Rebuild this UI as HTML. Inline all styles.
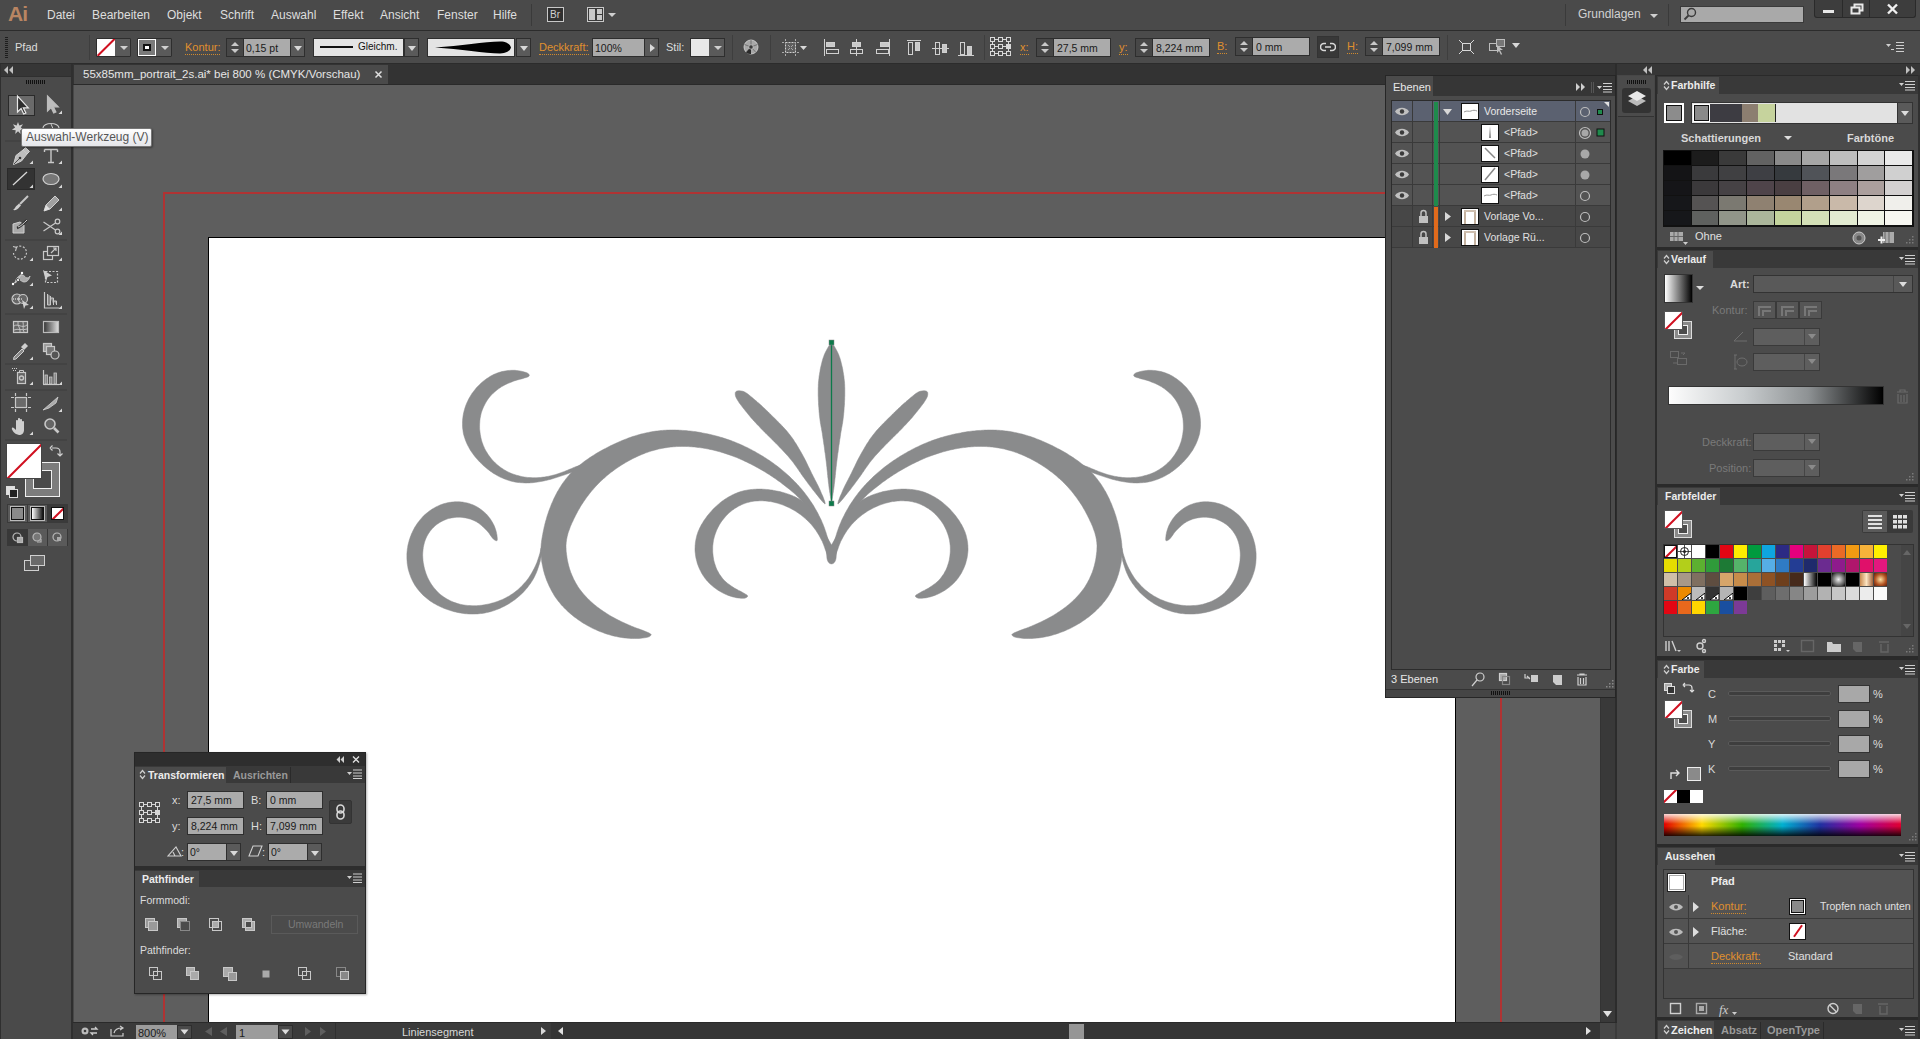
<!DOCTYPE html>
<html><head><meta charset="utf-8">
<style>
*{margin:0;padding:0;box-sizing:border-box}
html,body{width:1920px;height:1039px;overflow:hidden;background:#484848;font-family:"Liberation Sans",sans-serif;color:#d8d8d8;position:relative}
.a{position:absolute}
.t{position:absolute;white-space:nowrap;line-height:1}
.mn{top:9px;font-size:12px;color:#dedede}
.tri{width:0;height:0;border-left:4px solid transparent;border-right:4px solid transparent;border-top:4px solid #d0d0d0}
.lab{font-size:11px;color:#e0902e;border-bottom:1px dotted #d08a2e;padding-bottom:1px}
.spin{width:18px;height:19px;background:#474747;border:1px solid #2e2e2e}
.spin:before{content:"";position:absolute;left:4px;top:3px;border-left:4px solid transparent;border-right:4px solid transparent;border-bottom:4px solid #c8c8c8}
.spin:after{content:"";position:absolute;left:4px;top:10px;border-left:4px solid transparent;border-right:4px solid transparent;border-top:4px solid #c8c8c8}
.inp{height:19px;background:#ababab;border:1px solid #2e2e2e}
.it{font-size:10.5px;color:#1a1a1a}
.ddb{position:absolute;width:15px;height:19px;background:#5a5a5a;border:1px solid #2e2e2e}
.ddb:after{content:"";position:absolute;left:3px;top:7px;border-left:4px solid transparent;border-right:4px solid transparent;border-top:5px solid #d8d8d8}
</style></head><body>
<!-- MENU BAR -->
<div class="a" style="left:0;top:0;width:1920px;height:30px;background:#4a4a4a"></div>
<div class="a" style="left:0;top:30px;width:1920px;height:1px;background:#2c2c2c"></div>
<div class="t" style="left:8px;top:3px;font-size:21px;font-weight:bold;color:#b98562;letter-spacing:-1px">Ai</div>
<div class="t mn" style="left:47px">Datei</div>
<div class="t mn" style="left:92px">Bearbeiten</div>
<div class="t mn" style="left:167px">Objekt</div>
<div class="t mn" style="left:220px">Schrift</div>
<div class="t mn" style="left:271px">Auswahl</div>
<div class="t mn" style="left:333px">Effekt</div>
<div class="t mn" style="left:380px">Ansicht</div>
<div class="t mn" style="left:437px">Fenster</div>
<div class="t mn" style="left:493px">Hilfe</div>
<div class="a" style="left:531px;top:4px;width:1px;height:22px;background:#3a3a3a"></div>
<div class="a" style="left:547px;top:7px;width:17px;height:15px;border:1px solid #c8c8c8;background:#303030"></div>
<div class="t" style="left:550px;top:10px;font-size:10px;color:#d0d0d0">Br</div>
<div class="a" style="left:587px;top:7px;width:17px;height:15px;border:1px solid #c8c8c8;background:#3a3a3a"></div>
<div class="a" style="left:589px;top:9px;width:6px;height:11px;background:#c8c8c8"></div>
<div class="a" style="left:597px;top:9px;width:5px;height:5px;background:#c8c8c8"></div>
<div class="a" style="left:597px;top:15px;width:5px;height:5px;background:#c8c8c8"></div>
<div class="a tri" style="left:608px;top:13px"></div>
<div class="a" style="left:1565px;top:4px;width:1px;height:22px;background:#3a3a3a"></div>
<div class="t" style="left:1578px;top:8px;font-size:12px;color:#d2d2d2">Grundlagen</div>
<div class="a tri" style="left:1650px;top:14px"></div>
<div class="a" style="left:1668px;top:4px;width:1px;height:22px;background:#3a3a3a"></div>
<div class="a" style="left:1680px;top:6px;width:124px;height:17px;background:#a9a9a9;border:1px solid #3a3a3a"></div>
<svg class="a" style="left:1683px;top:7px" width="14" height="14"><circle cx="8.5" cy="5.5" r="4" fill="none" stroke="#3a3a3a" stroke-width="1.4"/><line x1="5.5" y1="8.5" x2="1.5" y2="12.5" stroke="#3a3a3a" stroke-width="1.8"/></svg>
<div class="a" style="left:1814px;top:0;width:102px;height:18px;background:#3d3d3d;border:1px solid #2a2a2a;border-top:none;border-radius:0 0 3px 3px"></div>
<div class="a" style="left:1842px;top:0;width:1px;height:17px;background:#2a2a2a"></div>
<div class="a" style="left:1869px;top:0;width:1px;height:17px;background:#2a2a2a"></div>
<div class="a" style="left:1823px;top:10px;width:11px;height:3px;background:#e8e8e8"></div>
<svg class="a" style="left:1850px;top:3px" width="14" height="12"><rect x="4.5" y="1.5" width="8" height="6" fill="none" stroke="#e8e8e8" stroke-width="2"/><rect x="1.5" y="4.5" width="8" height="6" fill="#3d3d3d" stroke="#e8e8e8" stroke-width="2"/></svg>
<svg class="a" style="left:1886px;top:3px" width="13" height="12"><path d="M2 1.5L11 10.5M11 1.5L2 10.5" stroke="#f0f0f0" stroke-width="2.4"/></svg>

<!-- CONTROL BAR -->
<div class="a" style="left:0;top:31px;width:1920px;height:33px;background:#4b4b4b"></div>
<div class="a" style="left:0;top:63px;width:1920px;height:1px;background:#2c2c2c"></div>
<div class="a" style="left:5px;top:37px;width:3px;height:22px;background:repeating-linear-gradient(#1e1e1e 0 1px,transparent 1px 2px)"></div>
<div class="t" style="left:15px;top:42px;font-size:11px;color:#dcdcdc">Pfad</div>
<div class="a" style="left:89px;top:35px;width:1px;height:25px;background:#3e3e3e"></div>
<!-- fill swatch -->
<div class="a" style="left:96px;top:38px;width:35px;height:19px;border:1px solid #2e2e2e;background:#5a5a5a;border-radius:1px"></div>
<div class="a" style="left:97px;top:39px;width:18px;height:17px;background:#fff;overflow:hidden"><div class="a" style="left:-3px;top:7px;width:25px;height:2px;background:#d01020;transform:rotate(-45deg)"></div></div>
<div class="a tri" style="left:120px;top:46px"></div>
<!-- stroke swatch -->
<div class="a" style="left:137px;top:38px;width:35px;height:19px;border:1px solid #2e2e2e;background:#5a5a5a;border-radius:1px"></div>
<div class="a" style="left:138px;top:39px;width:18px;height:17px;background:#7a7a7a;border:1px solid #fff"></div>
<div class="a" style="left:143px;top:44px;width:8px;height:7px;border:2px solid #111;background:#fff"></div>
<div class="a tri" style="left:161px;top:46px"></div>
<div class="t lab" style="left:185px;top:42px">Kontur:</div>
<!-- spinner stroke -->
<div class="a spin" style="left:226px;top:38px"></div>
<div class="a inp" style="left:243px;top:38px;width:48px"></div>
<div class="t it" style="left:246px;top:43px">0,15 pt</div>
<div class="a ddb" style="left:290px;top:38px"></div>
<!-- Gleichm -->
<div class="a" style="left:313px;top:38px;width:91px;height:19px;background:#e4e4e4;border:1px solid #2e2e2e"></div>
<div class="a" style="left:320px;top:46px;width:33px;height:2px;background:#111"></div>
<div class="t" style="left:358px;top:42px;font-size:10px;color:#111">Gleichm.</div>
<div class="a ddb" style="left:404px;top:38px"></div>
<!-- brush -->
<div class="a" style="left:427px;top:38px;width:88px;height:19px;background:#e4e4e4;border:1px solid #2e2e2e"></div>
<svg class="a" style="left:430px;top:39px" width="84" height="17"><path d="M5 8.5 C30 7, 55 2.5, 70 2.5 C80 2.5, 81 8.5, 81 8.5 C81 8.5, 80 14.5, 70 14.5 C55 14.5, 30 10, 5 8.5Z" fill="#000"/></svg>
<div class="a ddb" style="left:516px;top:38px"></div>
<div class="t lab" style="left:539px;top:42px">Deckkraft:</div>
<div class="a inp" style="left:592px;top:38px;width:53px"></div>
<div class="t it" style="left:595px;top:43px">100%</div>
<div class="a" style="left:644px;top:38px;width:15px;height:19px;background:#5a5a5a;border:1px solid #2e2e2e"><div class="a" style="left:5px;top:5px;width:0;height:0;border-left:5px solid #d8d8d8;border-top:4px solid transparent;border-bottom:4px solid transparent"></div></div>
<div class="t" style="left:666px;top:42px;font-size:11px;color:#dcdcdc">Stil:</div>
<div class="a" style="left:690px;top:38px;width:35px;height:19px;border:1px solid #2e2e2e;background:#5a5a5a"></div>
<div class="a" style="left:691px;top:39px;width:18px;height:17px;background:#e8e8e8"></div>
<div class="a tri" style="left:714px;top:46px"></div>
<div class="a" style="left:732px;top:35px;width:1px;height:25px;background:#3e3e3e"></div>
<svg class="a" style="left:743px;top:39px" width="16" height="16"><circle cx="8" cy="8" r="7" fill="#a8a8a8" stroke="#d8d8d8" stroke-width="0.8"/><path d="M8 8L8 1M8 8L14.5 5.5M8 8L13 13.5M8 8L3 13.5M8 8L1.5 5.5" stroke="#666" stroke-width="0.8"/><path d="M8 8L3 13.5A7 7 0 0 0 8 15z" fill="#2a2a2a"/><circle cx="8" cy="8" r="2.2" fill="#3a3a3a" stroke="#ddd" stroke-width="0.6"/></svg>
<div class="a" style="left:770px;top:35px;width:1px;height:25px;background:#3e3e3e"></div>
<svg class="a" style="left:781px;top:38px" width="27" height="19"><rect x="4.5" y="4.5" width="10" height="10" fill="#5e5e5e" stroke="#d0d0d0" stroke-dasharray="2 1"/><path d="M7 7l2 2M12 7l-2 2M7 12l2-2M12 12l-2-2" stroke="#bbb" stroke-width="0.8"/><path d="M1 4.5h2M16 4.5h2M1 14.5h2M16 14.5h2M4.5 1v2M14.5 1v2M4.5 16v2M14.5 16v2" stroke="#aaa"/><path d="M19 8h7l-3.5 4z" fill="#d8d8d8"/></svg>
<svg class="a" style="left:822px;top:38px" width="160" height="19" fill="none" stroke="#d0d0d0" stroke-width="1">
<path d="M2.5 1v17"/><rect x="4.5" y="4.5" width="8" height="4" fill="#c8c8c8"/><rect x="4.5" y="11.5" width="12" height="4"/>
<path d="M34.5 1v17"/><rect x="30.5" y="4.5" width="8" height="4" fill="#c8c8c8"/><rect x="28.5" y="11.5" width="12" height="4"/>
<path d="M67.5 1v17"/><rect x="58.5" y="4.5" width="8" height="4" fill="#c8c8c8"/><rect x="54.5" y="11.5" width="12" height="4"/>
<path d="M85 2.5h14"/><rect x="86.5" y="4.5" width="4" height="12"/><rect x="93.5" y="4.5" width="4" height="8" fill="#c8c8c8"/>
<path d="M110 10.5h17"/><rect x="113.5" y="4.5" width="4" height="12"/><rect x="120.5" y="6.5" width="4" height="8" fill="#c8c8c8"/>
<path d="M136 17.5h16"/><rect x="138.5" y="4.5" width="4" height="12"/><rect x="145.5" y="8.5" width="4" height="8" fill="#c8c8c8"/>
</svg>
<div class="a" style="left:984px;top:35px;width:1px;height:25px;background:#3e3e3e"></div>
<svg class="a" style="left:990px;top:37px" width="21" height="20" fill="none" stroke="#d8d8d8" stroke-width="1"><rect x="0.5" y="0.5" width="4" height="4"/><rect x="8.5" y="0.5" width="4" height="4"/><rect x="16.5" y="0.5" width="4" height="4"/><rect x="0.5" y="7.5" width="4" height="4"/><rect x="8.5" y="7.5" width="4" height="4"/><rect x="16.5" y="7.5" width="4" height="4" fill="#d8d8d8"/><rect x="0.5" y="14.5" width="4" height="4"/><rect x="8.5" y="14.5" width="4" height="4"/><rect x="16.5" y="14.5" width="4" height="4"/><path d="M4.5 2.5h4M12.5 2.5h4M4.5 9.5h4M12.5 9.5h4M4.5 16.5h4M12.5 16.5h4M2.5 4.5v3M2.5 11.5v3M18.5 4.5v3M18.5 11.5v3"/></svg>
<div class="t lab" style="left:1020px;top:42px">x:</div>
<div class="a spin" style="left:1036px;top:38px"></div>
<div class="a inp" style="left:1053px;top:38px;width:58px"></div>
<div class="t it" style="left:1057px;top:43px">27,5 mm</div>
<div class="t lab" style="left:1119px;top:42px">y:</div>
<div class="a spin" style="left:1135px;top:38px"></div>
<div class="a inp" style="left:1152px;top:38px;width:58px"></div>
<div class="t it" style="left:1156px;top:43px">8,224 mm</div>
<div class="t lab" style="left:1217px;top:41px">B:</div>
<div class="a spin" style="left:1235px;top:37px"></div>
<div class="a inp" style="left:1252px;top:37px;width:58px"></div>
<div class="t it" style="left:1256px;top:42px">0 mm</div>
<div class="a" style="left:1317px;top:36px;width:22px;height:22px;background:#383838;border:1px solid #333"></div>
<svg class="a" style="left:1320px;top:41px" width="16" height="12" fill="none" stroke="#d8d8d8" stroke-width="1.6"><path d="M6 2.5H4a3.5 3.5 0 0 0 0 7h2M10 2.5h2a3.5 3.5 0 0 1 0 7h-2M5 6h6"/></svg>
<div class="t lab" style="left:1347px;top:41px">H:</div>
<div class="a spin" style="left:1365px;top:37px"></div>
<div class="a inp" style="left:1382px;top:37px;width:58px"></div>
<div class="t it" style="left:1386px;top:42px">7,099 mm</div>
<div class="a" style="left:1447px;top:35px;width:1px;height:25px;background:#3e3e3e"></div>
<svg class="a" style="left:1458px;top:39px" width="17" height="16" fill="none" stroke="#d8d8d8"><rect x="4.5" y="4.5" width="8" height="7"/><path d="M1 1l3 3M16 1l-3 3M1 15l3-3M16 15l-3-3"/></svg>
<svg class="a" style="left:1488px;top:38px" width="34" height="18"><rect x="1.5" y="5.5" width="8" height="7" fill="none" stroke="#bdbdbd"/><rect x="8.5" y="1.5" width="8" height="7" fill="#777" stroke="#bdbdbd"/><path d="M9 7l6 5-3 0 2 4-1 1-2-4-2 2z" fill="#bdbdbd"/><path d="M24 5h8l-4 5z" fill="#d8d8d8"/></svg>
<svg class="a" style="left:1886px;top:41px" width="18" height="12"><path d="M0 3h5l-2.5 3z" fill="#cfcfcf"/><path d="M5 8.5h3M10 1.5h8M10 4.5h8M10 7.5h8M10 10.5h8" stroke="#cfcfcf"/></svg>
<!-- TOOLBAR -->
<div class="a" style="left:0;top:64px;width:73px;height:975px;background:#2f2f2f"></div>
<div class="a" style="left:1px;top:64px;width:70px;height:12px;background:#363636"></div>
<svg class="a" style="left:4px;top:66px" width="10" height="8"><path d="M4 0v8L0 4zM9 0v8L5 4z" fill="#c0c0c0"/></svg>
<div class="a" style="left:1px;top:77px;width:70px;height:962px;background:#4a4a4a"></div>
<div class="a" style="left:26px;top:80px;width:20px;height:4px;background:repeating-linear-gradient(90deg,#111 0 1px,transparent 1px 2px)"></div>
<div class="a" style="left:8px;top:95px;width:27px;height:21px;background:#6a6a6a;border:1px solid #2a2a2a"></div>
<svg class="a" style="left:0;top:0" width="72" height="600" fill="none" stroke="#c8c8c8" stroke-width="1.2">
 <defs><linearGradient id="gr"><stop offset="0" stop-color="#333"/><stop offset="1" stop-color="#e0e0e0"/></linearGradient></defs>
 <!-- selection -->
 <path d="M17.5 96v16l3.6-3.4 2.6 5.4 2.2-1-2.6-5.2h5z" fill="#2e2e2e" stroke="#e8e8e8"/>
 <path d="M47.5 96v15l3.6-3.4 2.6 5.4 2.2-1-2.6-5.2h5z" fill="#bdbdbd" stroke="#bdbdbd"/>
 <!-- magic wand / lasso -->
 <path d="M18 122l1.3 3.6 3.7-1.3-2.2 3.2 3.2 2.3-3.8.4.4 3.8-2.6-2.8-2.8 2.8.5-3.8-3.8-.4 3.2-2.3-2.2-3.2 3.7 1.3z" fill="#cfcfcf" stroke="none"/>
 <ellipse cx="51" cy="128" rx="8" ry="4.5"/><path d="M51 124l3 7-2 0" stroke-width="1"/>
 <path d="M5 141h62" stroke="#3c3c3c"/>
 <!-- pen -->
 <path d="M13.5 164.5l2.5-9 7-5.5 4 4-5.5 7z" fill="#bdbdbd" stroke="#d0d0d0" stroke-width="1"/><path d="M23 150l2.5-2.5 4 4-2.5 2.5" fill="#bdbdbd" stroke="#d0d0d0" stroke-width="1"/><circle cx="20" cy="158" r="1.3" fill="#333" stroke="none"/><path d="M14 164l5-5" stroke="#333" stroke-width="0.8"/>
 <path d="M44.5 149.5h13M44.5 149.5v2.5M57.5 149.5v2.5M51 149.5v12.5M48 162.5h6" stroke-width="1.4"/>
 <!-- ellipse -->
 <ellipse cx="51" cy="179" rx="8" ry="5.5" fill="#777" stroke="#cfcfcf"/>
 <!-- brush -->
 <path d="M13 210c2.5.5 5-.5 6.5-3l1.5-1.5-2-2-1.5 1.5c-2.5 1.5-2.5 4-4.5 5z" fill="#cfcfcf" stroke="none"/><path d="M20 204l8-8" stroke-width="2"/>
 <!-- pencil -->
 <path d="M44 211l2-6 9-9 4 4-9 9z" fill="#a0a0a0" stroke="#cfcfcf" stroke-width="1"/><path d="M44 211l2-6 4 4z" fill="#e0e0e0" stroke="none"/>
 <!-- blob brush -->
 <path d="M13 233v-9l7-2 4 3v8z" fill="#aaa" stroke="#cfcfcf" stroke-width="1"/><path d="M17 228c3-1 6-4 10-8" stroke="#333" stroke-width="2.5"/><path d="M18 227c3-1 5-3 9-7" stroke="#cfcfcf" stroke-width="1"/>
 <!-- scissors -->
 <circle cx="57.5" cy="221.5" r="2.3"/><circle cx="57.5" cy="231.5" r="2.3"/><path d="M43.5 222l12 8M43.5 231l12-8"/>
 <path d="M5 240h62" stroke="#3c3c3c"/>
 <!-- rotate -->
 <path d="M16 247.5a6.5 6.5 0 1 1-2.5 5.5" stroke-dasharray="2 1.6"/><path d="M13 246.5l3.5 1 -1 3.5" stroke-width="1.1"/>
 <!-- scale -->
 <rect x="43.5" y="251.5" width="9" height="8"/><rect x="47.5" y="246.5" width="11" height="9" fill="#4a4a4a"/><path d="M51 253l5-5M53 248h3v3"/>
 <!-- width tool -->
 <path d="M15 283c1-5 4-8 7-8s3 3 5 3 3-2 3-2c-1 4-3 6-6 6-2 0-3-2-5-2-1 0-2 2-4 3z" fill="#aaa" stroke="#cfcfcf" stroke-width="0.8"/><circle cx="18" cy="280" r="1.6" fill="#fff" stroke="#333" stroke-width="0.8"/><path d="M13 284l5-4 4-7" stroke-width="0.9"/><circle cx="13" cy="284" r="1.2" fill="#fff" stroke="none"/><circle cx="22" cy="273" r="1.2" fill="#fff" stroke="none"/>
 <!-- free transform -->
 <rect x="45.5" y="271.5" width="12" height="11" stroke-dasharray="2 1.5"/><path d="M43 270l9 5.5-4.5 1.5-1.5 4.5z" fill="#cfcfcf" stroke="none"/>
 <!-- shape builder -->
 <circle cx="17" cy="299" r="5" fill="#666"/><circle cx="23" cy="299" r="4.5" fill="#666"/><path d="M13 299h9" stroke="#fff" stroke-dasharray="1 1"/><path d="M22 300l7 5-3.5.5-1.5 3.5z" fill="#cfcfcf" stroke="none"/>
 <!-- perspective grid -->
 <path d="M44.5 292v16h15" /><path d="M47.5 294v11h3v-9M50.5 298h3v7M53.5 301h3v4" fill="#888" stroke-width="1"/>
 <path d="M5 314h62" stroke="#3c3c3c"/>
 <!-- mesh -->
 <rect x="13.5" y="321.5" width="14" height="11" fill="#666"/><path d="M14 326c4-3 8 3 13-1M18 322c-1 4 3 6 2 10M23 322c1 3-1 7 1 10M14 330c4-2 8 1 13-1" stroke-width="0.9"/>
 <!-- gradient -->
 <rect x="43.5" y="321.5" width="15" height="11" fill="url(#gr)" stroke="#bbb"/>
 <!-- eyedropper -->
 <path d="M14 357l8-8 2 2-8 8-2.5.5z" fill="#888" stroke="#cfcfcf" stroke-width="1"/><path d="M21 347l4-4 3 3-4 4z" fill="#cfcfcf" stroke="none"/>
 <!-- blend -->
 <rect x="43.5" y="343.5" width="8" height="8" fill="#999"/><rect x="46.5" y="346.5" width="8" height="8" fill="#777"/><circle cx="55" cy="355" r="4" fill="#555"/>
 <path d="M5 364h62" stroke="#3c3c3c"/>
 <!-- symbol sprayer -->
 <rect x="17.5" y="372.5" width="8" height="11" fill="#666"/><circle cx="21.5" cy="378" r="2" stroke-width="1.4"/><path d="M19.5 372.5v-2h4v2" stroke-width="1"/><g fill="#ccc" stroke="none"><rect x="12" y="368" width="1" height="1"/><rect x="14" y="368" width="1" height="1"/><rect x="16" y="368" width="1" height="1"/><rect x="13" y="370" width="1" height="1"/><rect x="15" y="370" width="1" height="1"/></g>
 <!-- graph -->
 <path d="M43 384.5h16" /><rect x="45" y="375" width="2.5" height="9" fill="#888" stroke-width="0.8"/><rect x="49.5" y="377" width="2.5" height="7" fill="#888" stroke-width="0.8"/><rect x="54" y="373" width="2.5" height="11" fill="#888" stroke-width="0.8"/><path d="M43.5 370v14"/>
 <path d="M5 390h62" stroke="#3c3c3c"/>
 <!-- artboard -->
 <rect x="15.5" y="397.5" width="11" height="10" fill="#6a6a6a"/><path d="M11 397.5h3M28 397.5h3M11 407.5h3M28 407.5h3M15.5 393v3M26.5 393v3M15.5 409v3M26.5 409v3"/>
 <!-- slice -->
 <path d="M43 410l7-6 8-7-2 6-7 5z" fill="#aaa" stroke="#cfcfcf" stroke-width="0.8"/>
 <!-- hand -->
 <path d="M16 434c-2-1-5-5-4-6 1-1 2 0 4 2v-9c0-1.2 2-1.2 2 0v6-8c0-1.2 2-1.2 2 0v8-7c0-1.2 2-1.2 2 0v7-5c0-1.2 2-1.2 2 0v8c0 3-2 5-5 5z" fill="#cfcfcf" stroke="none"/>
 <!-- zoom -->
 <circle cx="50" cy="424" r="5" fill="#666" stroke-width="1.6"/><path d="M54 428l4.5 4.5" stroke-width="2.6"/>
 <path d="M5 440h62" stroke="#3c3c3c"/>
</svg>
<!-- line tool highlighted -->
<div class="a" style="left:7px;top:168px;width:28px;height:22px;background:#333;border:1px solid #2a2a2a"></div>
<svg class="a" style="left:7px;top:168px" width="28" height="22"><path d="M6 17L20 4" stroke="#d8d8d8" stroke-width="1.3"/></svg>
<!-- tool corner triangles -->
<svg class="a" style="left:0;top:0" width="72" height="450" fill="#d8d8d8"><path d="M62 114h-3.5l3.5-3.5z"/><path d="M33 164h-3.5l3.5-3.5z"/><path d="M62 164h-3.5l3.5-3.5z"/><path d="M33 188h-3.5l3.5-3.5z"/><path d="M62 188h-3.5l3.5-3.5z"/><path d="M62 211h-3.5l3.5-3.5z"/><path d="M62 235h-3.5l3.5-3.5z"/><path d="M33 261h-3.5l3.5-3.5z"/><path d="M62 261h-3.5l3.5-3.5z"/><path d="M33 286h-3.5l3.5-3.5z"/><path d="M33 309h-3.5l3.5-3.5z"/><path d="M62 309h-3.5l3.5-3.5z"/><path d="M33 360h-3.5l3.5-3.5z"/><path d="M33 385h-3.5l3.5-3.5z"/><path d="M62 385h-3.5l3.5-3.5z"/><path d="M62 412h-3.5l3.5-3.5z"/><path d="M33 435h-3.5l3.5-3.5z"/></svg>
<!-- fill / stroke -->
<div class="a" style="left:25px;top:462px;width:35px;height:35px;background:#7c7c7c;border:1px solid #f0f0f0"></div>
<div class="a" style="left:33px;top:470px;width:19px;height:19px;background:#4a4a4a;border:1px solid #f0f0f0"></div>
<div class="a" style="left:6px;top:443px;width:36px;height:36px;background:#fff;border:1px solid #444;overflow:hidden"><div class="a" style="left:-7px;top:16px;width:50px;height:2px;background:#d01020;transform:rotate(-45deg)"></div></div>
<svg class="a" style="left:49px;top:444px" width="14" height="14" fill="none" stroke="#d0d0d0" stroke-width="1.2"><path d="M3 4h4c2.5 0 4 1.5 4 4v3M1 4l2.5-2.5M1 4l2.5 2.5M8.5 9.5l2.5 2.5 2.5-2.5"/></svg>
<div class="a" style="left:6px;top:486px;width:9px;height:9px;border:1px solid #ddd;background:#e0e0e0"></div>
<div class="a" style="left:9px;top:489px;width:9px;height:9px;border:1px solid #ddd;background:#222"></div>
<div class="a" style="left:7px;top:504px;width:61px;height:19px;background:#3a3a3a"></div>
<div class="a" style="left:8px;top:505px;width:19px;height:17px;background:#5a5a5a"></div>
<div class="a" style="left:28px;top:505px;width:19px;height:17px;background:#5a5a5a"></div>
<div class="a" style="left:11px;top:507px;width:13px;height:13px;background:#8a8a8a;border:1px solid #111;outline:1px solid #bbb"></div>
<div class="a" style="left:31px;top:507px;width:13px;height:13px;background:linear-gradient(90deg,#fff,#111);border:1px solid #111;outline:1px solid #bbb"></div>
<div class="a" style="left:51px;top:507px;width:13px;height:13px;background:#fff;border:1px solid #111;overflow:hidden"><div class="a" style="left:-3px;top:5px;width:18px;height:2px;background:#d01020;transform:rotate(-45deg)"></div></div>
<div class="a" style="left:7px;top:529px;width:61px;height:17px;background:#383838"></div>
<div class="a" style="left:28px;top:529px;width:19px;height:17px;background:#5a5a5a"></div>
<div class="a" style="left:48px;top:529px;width:19px;height:17px;background:#5a5a5a"></div>
<svg class="a" style="left:7px;top:529px" width="61" height="17" fill="none" stroke="#b8b8b8" stroke-width="1.2"><circle cx="10" cy="8" r="4"/><rect x="10.5" y="8.5" width="5" height="5" fill="#aaa"/><circle cx="30" cy="8" r="4" fill="#777"/><path d="M34 10v3h-4" /><circle cx="50" cy="8" r="4"/><path d="M50 8h4v4h-4z" fill="#aaa" stroke="none"/></svg>
<svg class="a" style="left:24px;top:555px" width="22" height="16" stroke="#d0d0d0" stroke-width="1"><rect x="0.5" y="5.5" width="14" height="10" fill="#555"/><rect x="6.5" y="0.5" width="14" height="10" fill="#6a6a6a"/></svg>
<!-- DOCUMENT AREA -->
<div class="a" style="left:73px;top:64px;width:1544px;height:21px;background:#333"></div>
<div class="a" style="left:74px;top:65px;width:314px;height:19px;background:#4a4a4a"></div>
<div class="t" style="left:83px;top:69px;font-size:11.5px;color:#e6e6e6">55x85mm_portrait_2s.ai* bei 800 % (CMYK/Vorschau)</div>
<svg class="a" style="left:374px;top:70px" width="9" height="9"><path d="M1.5 1.5l6 6M7.5 1.5l-6 6" stroke="#e0e0e0" stroke-width="1.5"/></svg>
<div class="a" style="left:73px;top:84px;width:1544px;height:1px;background:#2a2a2a"></div>
<div class="a" style="left:74px;top:85px;width:1526px;height:938px;background:#5e5e5e;overflow:hidden">
  <div class="a" style="left:89px;top:107px;width:2px;height:900px;background:#b03333"></div>
  <div class="a" style="left:89px;top:107px;width:1339px;height:2px;background:#b03333"></div>
  <div class="a" style="left:1426px;top:107px;width:2px;height:900px;background:#b03333"></div>
  <div class="a" style="left:134px;top:152px;width:1248px;height:800px;background:#fff;border:1px solid #000"></div>
</div>
<svg class="a" style="left:0;top:0" width="1920" height="1039" fill="#8a8b8c" stroke="#8a8b8c" stroke-width="0.5">
<g><path d="M588.0,463.0 L586.5,463.4 L585.0,463.9 L583.5,464.3 L582.0,464.7 L580.5,465.2 L579.1,465.6 L577.6,466.1 L576.1,466.6 L574.6,467.2 L573.2,467.7 L571.8,468.4 L570.3,469.0 L568.9,469.6 L567.5,470.2 L566.0,470.8 L564.5,471.4 L563.1,471.9 L561.6,472.4 L560.1,473.0 L558.7,473.5 L557.2,474.0 L555.7,474.5 L554.1,474.9 L552.6,475.3 L551.1,475.7 L549.6,476.0 L548.0,476.4 L546.5,476.6 L544.9,476.9 L543.3,477.1 L541.7,477.3 L540.2,477.5 L538.6,477.6 L537.0,477.7 L535.4,477.7 L533.8,477.7 L532.2,477.7 L530.6,477.6 L529.0,477.6 L527.4,477.4 L525.8,477.2 L524.2,477.0 L522.6,476.7 L521.1,476.4 L519.6,476.0 L518.0,475.6 L516.5,475.2 L515.0,474.7 L513.5,474.2 L512.0,473.7 L510.5,473.1 L509.0,472.4 L507.6,471.7 L506.3,471.0 L504.9,470.2 L503.6,469.4 L502.3,468.5 L501.0,467.7 L499.7,466.7 L498.5,465.7 L497.2,464.7 L496.1,463.7 L494.9,462.6 L493.8,461.5 L492.8,460.4 L491.7,459.2 L490.7,457.9 L489.7,456.6 L488.7,455.3 L487.8,454.0 L487.0,452.6 L486.1,451.2 L485.3,449.8 L484.6,448.4 L484.0,447.0 L483.3,445.5 L482.8,444.0 L482.2,442.4 L481.7,440.9 L481.3,439.3 L480.9,437.7 L480.6,436.1 L480.3,434.5 L480.1,432.9 L479.9,431.3 L479.7,429.7 L479.6,428.2 L479.6,426.6 L479.6,425.0 L479.7,423.4 L479.8,421.8 L479.9,420.2 L480.1,418.6 L480.4,417.1 L480.7,415.5 L481.0,414.0 L481.4,412.5 L481.9,411.0 L482.5,409.4 L483.1,407.9 L483.8,406.4 L484.5,405.0 L485.3,403.5 L486.1,402.1 L486.9,400.8 L487.8,399.4 L488.8,398.1 L489.7,396.9 L490.7,395.8 L491.8,394.6 L492.9,393.5 L494.0,392.5 L495.2,391.4 L496.4,390.4 L497.6,389.5 L498.8,388.6 L500.1,387.7 L501.4,386.8 L502.9,386.0 L504.3,385.2 L505.8,384.4 L507.3,383.7 L508.8,383.1 L510.3,382.5 L511.8,381.9 L513.2,381.3 L514.9,380.7 L516.6,380.2 L518.3,379.7 L519.9,379.3 L521.5,378.9 L523.0,378.5 L524.4,378.0 L526.4,377.4 L528.2,376.8 L529.2,376.0 L529.2,375.0 L528.7,374.0 L527.7,373.2 L526.2,372.6 L524.4,372.0 L522.6,371.5 L521.2,371.2 L519.8,370.9 L518.2,370.7 L516.6,370.5 L514.9,370.3 L513.2,370.3 L511.5,370.3 L509.8,370.4 L508.3,370.5 L506.7,370.7 L505.1,371.0 L503.5,371.3 L501.9,371.6 L500.3,372.1 L498.7,372.5 L497.2,373.1 L495.6,373.7 L494.1,374.3 L492.7,375.0 L491.3,375.7 L490.0,376.5 L488.6,377.4 L487.2,378.3 L485.9,379.2 L484.6,380.2 L483.3,381.2 L482.1,382.2 L480.9,383.3 L479.7,384.4 L478.7,385.4 L477.6,386.5 L476.6,387.6 L475.6,388.8 L474.7,390.0 L473.7,391.2 L472.8,392.4 L471.9,393.6 L471.1,394.9 L470.3,396.2 L469.5,397.5 L468.8,398.8 L468.1,400.2 L467.4,401.7 L466.7,403.2 L466.1,404.7 L465.5,406.3 L465.0,407.8 L464.5,409.4 L464.1,411.0 L463.7,412.5 L463.4,414.1 L463.1,415.7 L462.9,417.2 L462.7,418.7 L462.6,420.2 L462.5,421.7 L462.5,423.3 L462.5,424.8 L462.5,426.3 L462.6,427.8 L462.8,429.3 L463.0,430.8 L463.2,432.3 L463.5,433.9 L463.9,435.4 L464.4,437.0 L464.9,438.6 L465.4,440.1 L466.0,441.6 L466.7,443.2 L467.4,444.7 L468.1,446.1 L468.9,447.6 L469.7,449.0 L470.5,450.4 L471.4,451.7 L472.4,453.1 L473.3,454.4 L474.3,455.7 L475.3,457.0 L476.4,458.3 L477.5,459.6 L478.6,460.8 L479.7,462.0 L480.8,463.1 L481.9,464.1 L483.0,465.2 L484.2,466.3 L485.4,467.3 L486.6,468.3 L487.8,469.3 L489.1,470.2 L490.3,471.2 L491.6,472.0 L492.8,472.9 L494.1,473.7 L495.5,474.5 L496.8,475.3 L498.2,476.1 L499.6,476.8 L501.1,477.5 L502.5,478.1 L503.9,478.7 L505.4,479.3 L506.8,479.8 L508.3,480.3 L509.8,480.8 L511.4,481.2 L513.0,481.6 L514.6,481.9 L516.2,482.2 L517.8,482.4 L519.4,482.6 L521.1,482.7 L522.7,482.8 L524.4,482.9 L526.1,483.0 L527.6,482.9 L529.3,482.9 L530.9,482.8 L532.5,482.7 L534.1,482.5 L535.8,482.3 L537.4,482.1 L539.0,481.8 L540.7,481.5 L542.3,481.2 L543.9,480.9 L545.4,480.6 L547.0,480.2 L548.6,479.8 L550.2,479.4 L551.7,479.0 L553.3,478.5 L554.8,478.0 L556.3,477.6 L557.8,477.1 L559.3,476.6 L560.8,476.1 L562.3,475.6 L563.9,475.1 L565.4,474.6 L566.9,474.0 L568.3,473.5 L569.8,473.0 L571.3,472.4 L572.7,471.9 L574.1,471.4 L575.7,471.0 L577.2,470.5 L578.6,470.1 L580.1,469.7 L581.6,469.3 L583.1,468.8 L584.5,468.4 L586.0,468.0Z"/><path d="M831.5,556.0 L831.3,554.5 L831.0,552.9 L830.8,551.4 L830.5,549.7 L830.2,548.4 L829.9,547.0 L829.6,545.6 L829.2,544.1 L828.9,542.6 L828.5,541.0 L828.1,539.5 L827.6,537.9 L827.2,536.4 L826.7,534.9 L826.3,533.4 L825.8,531.9 L825.2,530.3 L824.7,528.7 L824.1,527.1 L823.5,525.6 L822.9,524.0 L822.2,522.4 L821.6,521.0 L821.0,519.6 L820.3,518.2 L819.6,516.8 L818.9,515.4 L818.2,514.0 L817.5,512.6 L816.7,511.2 L815.9,509.8 L815.1,508.4 L814.3,507.0 L813.5,505.6 L812.7,504.3 L811.8,503.1 L811.0,501.8 L810.1,500.5 L809.3,499.3 L808.4,498.0 L807.5,496.7 L806.6,495.5 L805.6,494.2 L804.7,493.0 L803.7,491.7 L802.7,490.5 L801.7,489.3 L800.6,488.1 L799.6,487.0 L798.7,485.8 L797.6,484.7 L796.6,483.6 L795.6,482.5 L794.5,481.4 L793.4,480.3 L792.3,479.3 L791.2,478.2 L790.1,477.1 L789.0,476.1 L787.8,475.0 L786.7,474.0 L785.5,472.9 L784.3,471.9 L783.1,470.9 L781.9,469.9 L780.8,469.0 L779.6,468.0 L778.4,467.1 L777.1,466.1 L775.9,465.2 L774.6,464.3 L773.4,463.3 L772.1,462.4 L770.8,461.5 L769.5,460.6 L768.2,459.8 L766.9,458.9 L765.6,458.0 L764.2,457.2 L762.9,456.3 L761.5,455.5 L760.2,454.7 L758.9,453.9 L757.6,453.2 L756.2,452.4 L754.9,451.6 L753.5,450.9 L752.2,450.2 L750.8,449.4 L749.4,448.7 L748.0,448.0 L746.6,447.3 L745.2,446.7 L743.8,446.0 L742.4,445.3 L741.0,444.7 L739.6,444.1 L738.2,443.5 L736.8,442.9 L735.3,442.3 L733.9,441.7 L732.5,441.2 L731.0,440.6 L729.5,440.1 L728.0,439.6 L726.5,439.1 L725.0,438.6 L723.5,438.1 L722.0,437.6 L720.5,437.2 L719.0,436.7 L717.5,436.3 L716.0,435.9 L714.5,435.5 L713.0,435.2 L711.5,434.8 L710.0,434.4 L708.5,434.1 L707.0,433.8 L705.5,433.5 L703.9,433.2 L702.4,432.9 L700.9,432.6 L699.4,432.3 L697.8,432.1 L696.3,431.8 L694.8,431.6 L693.3,431.4 L691.8,431.2 L690.2,431.0 L688.7,430.9 L687.2,430.7 L685.7,430.6 L684.2,430.5 L682.7,430.4 L681.2,430.3 L679.7,430.2 L678.1,430.1 L676.5,430.1 L674.9,430.0 L673.3,430.0 L671.8,430.0 L670.2,430.0 L668.6,430.1 L667.1,430.1 L665.5,430.2 L664.0,430.3 L662.4,430.4 L660.9,430.5 L659.3,430.7 L657.8,430.9 L656.2,431.1 L654.7,431.3 L653.1,431.5 L651.6,431.8 L650.1,432.1 L648.5,432.4 L647.0,432.7 L645.5,433.0 L643.9,433.4 L642.4,433.8 L640.9,434.1 L639.4,434.6 L637.8,435.0 L636.3,435.4 L634.8,435.9 L633.4,436.3 L631.9,436.8 L630.5,437.3 L629.1,437.8 L627.7,438.3 L626.3,438.9 L624.8,439.4 L623.4,440.0 L622.0,440.6 L620.6,441.2 L619.2,441.8 L617.8,442.4 L616.4,443.0 L615.0,443.7 L613.6,444.3 L612.2,445.0 L610.9,445.6 L609.5,446.3 L608.2,447.0 L606.8,447.7 L605.5,448.4 L604.1,449.1 L602.8,449.8 L601.4,450.5 L600.1,451.3 L598.8,452.0 L597.4,452.8 L596.1,453.6 L594.8,454.4 L593.6,455.2 L592.3,456.0 L591.1,456.8 L589.8,457.6 L588.6,458.4 L587.4,459.3 L586.1,460.2 L584.8,461.1 L583.6,462.0 L582.4,462.9 L581.2,463.9 L580.0,464.8 L578.8,465.8 L577.6,466.7 L576.5,467.7 L575.4,468.7 L574.3,469.7 L573.2,470.8 L572.1,471.8 L571.1,472.9 L570.0,474.1 L569.0,475.2 L567.9,476.4 L566.9,477.7 L565.9,478.9 L565.0,480.2 L564.0,481.4 L563.1,482.7 L562.2,484.0 L561.3,485.3 L560.5,486.7 L559.6,488.0 L558.8,489.4 L558.0,490.8 L557.2,492.1 L556.5,493.4 L555.8,494.8 L555.1,496.2 L554.4,497.6 L553.7,499.0 L553.1,500.4 L552.5,501.9 L551.8,503.3 L551.2,504.8 L550.7,506.2 L550.1,507.7 L549.6,509.1 L549.0,510.5 L548.5,512.0 L548.0,513.5 L547.5,514.9 L547.0,516.4 L546.6,517.9 L546.2,519.4 L545.7,521.0 L545.3,522.5 L544.9,524.0 L544.6,525.5 L544.2,526.9 L543.9,528.4 L543.6,529.9 L543.3,531.3 L543.0,532.7 L542.7,534.4 L542.4,536.1 L542.1,537.7 L541.8,539.4 L541.6,541.0 L541.4,542.6 L541.2,544.2 L541.1,545.8 L541.0,547.4 L540.9,549.0 L540.9,550.6 L540.9,552.3 L541.0,553.9 L541.1,555.5 L541.2,557.1 L541.4,558.7 L541.6,560.4 L541.8,562.0 L542.1,563.7 L542.4,565.1 L542.7,566.6 L543.0,568.0 L543.3,569.5 L543.7,571.0 L544.1,572.5 L544.5,574.0 L545.0,575.5 L545.5,576.9 L546.0,578.4 L546.5,579.9 L547.1,581.3 L547.7,582.7 L548.3,584.1 L548.9,585.5 L549.6,586.9 L550.3,588.3 L551.0,589.7 L551.7,591.1 L552.5,592.5 L553.3,593.8 L554.1,595.2 L554.9,596.5 L555.8,597.8 L556.7,599.0 L557.6,600.2 L558.5,601.4 L559.5,602.6 L560.4,603.7 L561.4,604.9 L562.4,606.0 L563.5,607.1 L564.5,608.2 L565.6,609.3 L566.7,610.3 L567.8,611.4 L569.0,612.4 L570.1,613.4 L571.3,614.4 L572.5,615.4 L573.7,616.4 L575.0,617.4 L576.3,618.3 L577.5,619.3 L578.9,620.2 L580.2,621.1 L581.5,622.0 L582.9,622.9 L584.3,623.7 L585.7,624.5 L587.0,625.3 L588.4,626.1 L589.8,626.8 L591.2,627.6 L592.6,628.3 L594.1,629.0 L595.5,629.6 L597.0,630.3 L598.4,630.9 L599.9,631.5 L601.4,632.1 L602.9,632.6 L604.4,633.2 L605.8,633.7 L607.3,634.2 L608.8,634.6 L610.2,635.0 L611.8,635.5 L613.4,635.9 L615.0,636.3 L616.6,636.6 L618.2,636.9 L619.8,637.2 L621.4,637.5 L623.0,637.7 L624.5,637.9 L626.1,638.1 L627.6,638.2 L629.0,638.3 L630.8,638.5 L632.6,638.5 L634.4,638.5 L636.2,638.5 L637.9,638.5 L639.5,638.4 L641.0,638.2 L642.5,638.1 L644.5,637.8 L646.4,637.5 L648.1,637.1 L649.5,636.6 L650.7,635.6 L651.2,634.6 L650.6,633.9 L649.2,633.1 L647.5,632.3 L645.6,631.5 L644.5,631.1 L643.3,630.6 L642.0,630.1 L640.6,629.6 L639.2,629.0 L637.7,628.5 L636.2,628.0 L634.7,627.4 L633.1,626.8 L631.6,626.2 L630.1,625.5 L628.7,624.9 L627.4,624.3 L625.9,623.7 L624.5,623.0 L623.1,622.4 L621.6,621.7 L620.2,621.0 L618.7,620.3 L617.2,619.5 L615.8,618.8 L614.4,618.0 L613.0,617.3 L611.6,616.5 L610.2,615.7 L608.9,614.9 L607.5,614.0 L606.2,613.2 L604.9,612.3 L603.6,611.5 L602.3,610.6 L601.0,609.7 L599.7,608.8 L598.4,607.8 L597.2,606.9 L596.0,605.9 L594.8,605.0 L593.6,604.0 L592.5,603.0 L591.3,601.9 L590.2,600.9 L589.0,599.8 L587.9,598.7 L586.8,597.6 L585.8,596.5 L584.7,595.3 L583.7,594.2 L582.7,593.0 L581.7,591.8 L580.8,590.6 L579.9,589.4 L579.0,588.2 L578.1,586.9 L577.3,585.5 L576.4,584.1 L575.6,582.7 L574.9,581.3 L574.1,579.9 L573.4,578.5 L572.8,577.0 L572.1,575.6 L571.5,574.1 L570.9,572.7 L570.4,571.2 L569.9,569.8 L569.4,568.2 L569.0,566.7 L568.5,565.1 L568.2,563.6 L567.8,562.0 L567.5,560.5 L567.2,559.0 L567.0,557.5 L566.8,556.0 L566.6,554.6 L566.4,553.0 L566.2,551.4 L566.1,549.9 L566.1,548.4 L566.0,546.9 L566.0,545.4 L566.1,544.0 L566.2,542.6 L566.4,541.0 L566.6,539.5 L566.9,538.0 L567.2,536.5 L567.6,535.0 L568.0,533.4 L568.4,532.1 L568.9,530.8 L569.4,529.4 L569.9,528.0 L570.4,526.6 L571.0,525.2 L571.6,523.8 L572.3,522.3 L573.0,520.9 L573.6,519.5 L574.3,518.1 L575.0,516.7 L575.7,515.3 L576.4,513.9 L577.2,512.5 L577.9,511.0 L578.8,509.6 L579.6,508.2 L580.4,506.7 L581.3,505.3 L582.2,503.9 L583.0,502.7 L583.8,501.5 L584.7,500.3 L585.5,499.0 L586.4,497.8 L587.3,496.6 L588.2,495.4 L589.1,494.2 L590.0,493.0 L591.0,491.8 L592.0,490.6 L593.0,489.5 L594.0,488.3 L595.0,487.2 L596.0,486.0 L597.1,484.9 L598.2,483.8 L599.3,482.7 L600.4,481.6 L601.5,480.6 L602.7,479.5 L603.8,478.4 L605.0,477.4 L606.2,476.3 L607.4,475.3 L608.7,474.3 L609.9,473.3 L611.1,472.3 L612.4,471.4 L613.7,470.4 L614.9,469.5 L616.2,468.6 L617.5,467.7 L618.8,466.8 L620.2,465.9 L621.5,465.1 L622.9,464.2 L624.2,463.4 L625.6,462.6 L627.0,461.8 L628.4,461.0 L629.8,460.2 L631.2,459.5 L632.6,458.7 L634.0,458.0 L635.4,457.4 L636.8,456.7 L638.2,456.1 L639.6,455.4 L641.1,454.8 L642.5,454.2 L643.9,453.7 L645.3,453.1 L646.8,452.6 L648.2,452.1 L649.7,451.6 L651.1,451.1 L652.6,450.7 L654.0,450.3 L655.5,449.9 L657.0,449.5 L658.5,449.1 L659.9,448.8 L661.4,448.5 L662.9,448.2 L664.4,447.9 L665.9,447.7 L667.4,447.5 L668.9,447.3 L670.5,447.1 L672.0,446.9 L673.5,446.8 L675.0,446.7 L676.6,446.6 L678.1,446.5 L679.7,446.5 L681.2,446.4 L682.7,446.4 L684.2,446.4 L685.7,446.5 L687.2,446.5 L688.7,446.6 L690.2,446.7 L691.7,446.8 L693.2,446.9 L694.8,447.0 L696.3,447.2 L697.8,447.4 L699.4,447.6 L700.9,447.8 L702.4,448.0 L703.9,448.2 L705.5,448.5 L707.0,448.8 L708.5,449.1 L710.0,449.4 L711.5,449.7 L713.0,450.0 L714.5,450.4 L716.0,450.8 L717.5,451.2 L719.0,451.6 L720.5,452.0 L722.0,452.5 L723.5,452.9 L725.0,453.4 L726.5,453.9 L728.0,454.4 L729.5,454.9 L731.0,455.4 L732.5,456.0 L733.9,456.5 L735.3,457.1 L736.8,457.6 L738.2,458.2 L739.6,458.8 L741.0,459.4 L742.4,460.1 L743.8,460.7 L745.2,461.4 L746.6,462.0 L748.0,462.7 L749.4,463.4 L750.8,464.1 L752.1,464.8 L753.5,465.5 L754.9,466.2 L756.2,467.0 L757.6,467.7 L758.9,468.4 L760.2,469.2 L761.5,469.9 L762.9,470.7 L764.2,471.5 L765.5,472.3 L766.9,473.2 L768.2,474.0 L769.5,474.8 L770.8,475.7 L772.1,476.5 L773.4,477.4 L774.6,478.2 L775.9,479.1 L777.1,480.0 L778.4,480.9 L779.6,481.7 L780.8,482.6 L781.9,483.5 L783.1,484.4 L784.4,485.4 L785.7,486.4 L787.0,487.4 L788.3,488.4 L789.6,489.4 L790.8,490.5 L792.0,491.5 L793.2,492.5 L794.4,493.6 L795.6,494.6 L796.7,495.7 L797.8,496.7 L798.9,497.8 L799.9,498.9 L801.1,500.1 L802.3,501.3 L803.4,502.5 L804.5,503.7 L805.6,504.9 L806.6,506.1 L807.6,507.4 L808.6,508.6 L809.5,509.9 L810.5,511.2 L811.4,512.5 L812.2,513.8 L813.1,515.1 L813.9,516.5 L814.6,517.8 L815.4,519.2 L816.1,520.6 L816.8,522.0 L817.5,523.4 L818.2,524.9 L818.9,526.3 L819.5,527.7 L820.2,529.1 L820.8,530.5 L821.4,531.9 L822.0,533.4 L822.5,534.8 L823.1,536.2 L823.7,537.7 L824.2,539.1 L824.8,540.5 L825.3,541.9 L825.9,543.2 L826.5,544.7 L827.1,546.2 L827.8,547.6 L828.4,549.0 L829.0,550.4 L829.6,551.8 L830.3,553.2 L830.9,554.6 L831.5,556.0Z"/><path d="M541.0,548.0 L540.6,549.8 L540.3,551.5 L539.9,553.3 L539.3,555.2 L538.9,556.6 L538.4,558.1 L537.9,559.6 L537.4,561.1 L536.8,562.7 L536.1,564.3 L535.4,565.9 L534.6,567.5 L534.0,568.8 L533.3,570.1 L532.5,571.5 L531.8,572.8 L531.0,574.2 L530.1,575.5 L529.3,576.9 L528.4,578.2 L527.4,579.5 L526.5,580.7 L525.5,581.9 L524.4,583.1 L523.3,584.3 L522.2,585.5 L521.1,586.7 L519.9,587.8 L518.7,588.9 L517.5,590.0 L516.2,591.0 L514.9,592.1 L513.6,593.0 L512.2,594.0 L510.9,594.8 L509.6,595.7 L508.2,596.5 L506.8,597.2 L505.4,598.0 L504.0,598.7 L502.6,599.4 L501.1,600.0 L499.6,600.6 L498.1,601.2 L496.6,601.7 L495.1,602.2 L493.6,602.7 L492.1,603.1 L490.6,603.5 L489.1,603.9 L487.6,604.2 L486.0,604.5 L484.5,604.8 L482.9,605.1 L481.4,605.3 L479.8,605.4 L478.3,605.6 L476.7,605.7 L475.2,605.7 L473.6,605.7 L472.0,605.7 L470.4,605.6 L468.8,605.5 L467.2,605.4 L465.5,605.2 L463.9,605.0 L462.4,604.7 L460.8,604.4 L459.3,604.0 L457.7,603.6 L456.3,603.1 L454.8,602.6 L453.3,602.1 L451.8,601.4 L450.3,600.8 L448.9,600.0 L447.5,599.3 L446.1,598.5 L444.7,597.6 L443.4,596.7 L442.1,595.8 L440.9,594.9 L439.8,593.9 L438.6,592.9 L437.5,591.8 L436.5,590.7 L435.5,589.6 L434.5,588.4 L433.5,587.2 L432.6,586.0 L431.7,584.8 L430.9,583.5 L430.1,582.2 L429.3,580.8 L428.5,579.3 L427.8,577.9 L427.1,576.3 L426.5,574.8 L425.9,573.2 L425.4,571.6 L424.9,570.1 L424.5,568.5 L424.1,566.9 L423.8,565.3 L423.5,563.8 L423.2,562.2 L423.0,560.5 L422.9,558.9 L422.8,557.3 L422.7,555.7 L422.7,554.1 L422.8,552.5 L422.9,551.0 L423.1,549.3 L423.3,547.6 L423.6,546.0 L424.0,544.3 L424.4,542.7 L424.9,541.1 L425.5,539.5 L426.1,538.0 L426.8,536.5 L427.6,535.1 L428.4,533.7 L429.3,532.4 L430.2,531.1 L431.3,529.8 L432.3,528.6 L433.5,527.4 L434.6,526.3 L435.8,525.2 L437.0,524.3 L438.3,523.4 L439.7,522.5 L441.1,521.7 L442.5,521.0 L444.0,520.3 L445.4,519.7 L446.9,519.1 L448.4,518.6 L449.9,518.3 L451.5,517.9 L453.0,517.7 L454.6,517.5 L456.2,517.3 L457.8,517.2 L459.4,517.2 L461.0,517.3 L462.6,517.5 L464.1,517.7 L465.7,517.9 L467.2,518.3 L468.8,518.7 L470.3,519.1 L471.8,519.7 L473.3,520.3 L474.7,520.9 L476.1,521.6 L477.4,522.4 L478.8,523.3 L480.0,524.3 L481.3,525.3 L482.5,526.4 L483.7,527.5 L484.8,528.6 L485.9,529.7 L487.0,530.8 L488.1,532.1 L489.2,533.5 L490.2,535.0 L491.2,536.4 L492.2,537.7 L493.1,538.8 L493.9,539.6 L495.6,540.6 L496.9,540.8 L497.3,539.9 L497.3,538.4 L497.1,536.5 L496.9,534.7 L496.6,533.4 L496.3,532.0 L495.9,530.5 L495.4,529.0 L494.9,527.5 L494.3,526.0 L493.6,524.5 L492.9,523.2 L492.1,521.8 L491.3,520.5 L490.4,519.1 L489.4,517.8 L488.4,516.5 L487.4,515.2 L486.3,514.0 L485.1,512.9 L484.0,511.9 L482.8,510.9 L481.6,509.9 L480.3,509.0 L478.9,508.1 L477.6,507.2 L476.2,506.4 L474.8,505.7 L473.3,505.0 L471.9,504.5 L470.4,503.9 L468.9,503.4 L467.4,503.0 L465.8,502.7 L464.2,502.4 L462.7,502.1 L461.1,501.9 L459.5,501.8 L457.9,501.8 L456.3,501.8 L454.8,501.8 L453.3,501.9 L451.8,502.1 L450.3,502.3 L448.8,502.5 L447.3,502.8 L445.8,503.2 L444.3,503.6 L442.9,504.0 L441.4,504.5 L440.0,505.1 L438.6,505.7 L437.1,506.4 L435.7,507.1 L434.3,507.9 L432.8,508.7 L431.5,509.6 L430.1,510.5 L428.8,511.4 L427.5,512.5 L426.2,513.5 L425.0,514.6 L423.8,515.6 L422.7,516.8 L421.7,517.9 L420.6,519.2 L419.6,520.4 L418.6,521.7 L417.6,523.0 L416.7,524.3 L415.8,525.7 L414.9,527.1 L414.1,528.5 L413.4,529.9 L412.7,531.3 L412.1,532.7 L411.4,534.1 L410.9,535.6 L410.3,537.0 L409.8,538.5 L409.3,540.0 L408.9,541.6 L408.5,543.1 L408.1,544.6 L407.8,546.1 L407.6,547.7 L407.3,549.2 L407.2,550.7 L407.0,552.2 L406.9,553.7 L406.9,555.3 L406.9,556.8 L406.9,558.4 L407.0,560.0 L407.1,561.5 L407.2,563.0 L407.4,564.6 L407.7,566.1 L407.9,567.6 L408.2,569.0 L408.6,570.6 L409.1,572.1 L409.5,573.6 L410.1,575.1 L410.6,576.6 L411.2,578.1 L411.9,579.6 L412.6,581.0 L413.3,582.4 L414.1,583.8 L414.9,585.2 L415.8,586.5 L416.7,587.8 L417.6,589.0 L418.6,590.2 L419.6,591.4 L420.6,592.6 L421.7,593.8 L422.8,594.9 L424.0,596.0 L425.2,597.0 L426.4,598.0 L427.6,599.0 L428.9,600.0 L430.1,600.9 L431.3,601.7 L432.6,602.6 L434.0,603.4 L435.3,604.1 L436.7,604.9 L438.0,605.6 L439.5,606.3 L440.9,606.9 L442.3,607.6 L443.7,608.2 L445.2,608.8 L446.6,609.3 L448.1,609.8 L449.6,610.3 L451.1,610.8 L452.7,611.2 L454.2,611.7 L455.8,612.0 L457.3,612.4 L458.9,612.7 L460.5,613.0 L462.1,613.3 L463.6,613.5 L465.2,613.7 L466.8,613.8 L468.3,613.9 L469.8,614.0 L471.4,614.0 L472.9,614.0 L474.5,614.0 L476.0,613.9 L477.5,613.9 L479.1,613.7 L480.6,613.6 L482.1,613.4 L483.6,613.2 L485.1,612.9 L486.6,612.6 L488.1,612.3 L489.6,611.9 L491.1,611.5 L492.5,611.1 L494.0,610.6 L495.5,610.1 L496.9,609.5 L498.3,609.0 L499.8,608.4 L501.2,607.7 L502.6,607.1 L503.9,606.4 L505.3,605.7 L506.6,605.0 L508.0,604.2 L509.3,603.4 L510.6,602.6 L511.9,601.7 L513.2,600.8 L514.5,599.9 L515.7,599.0 L516.9,598.0 L518.1,597.0 L519.3,596.0 L520.4,595.0 L521.5,594.0 L522.7,592.9 L523.8,591.7 L524.9,590.5 L525.9,589.3 L527.0,588.1 L528.0,586.8 L528.9,585.5 L529.9,584.2 L530.8,582.9 L531.7,581.6 L532.5,580.3 L533.3,578.9 L534.1,577.5 L534.8,576.0 L535.5,574.6 L536.2,573.1 L536.8,571.6 L537.4,570.1 L537.9,568.5 L538.4,567.0 L538.9,565.5 L539.4,563.9 L539.8,562.4 L540.3,560.9 L540.6,559.3 L540.9,557.8 L541.2,556.3 L541.5,554.7 L541.8,553.2 L542.0,551.7 L542.2,550.1 L542.5,548.6 L542.7,547.0 L543.0,545.5Z"/><path d="M816.0,514.0 L815.0,512.9 L814.0,511.8 L813.0,510.6 L812.0,509.5 L811.0,508.4 L810.0,507.3 L808.9,506.2 L807.8,505.2 L806.6,504.2 L805.5,503.3 L804.3,502.4 L803.0,501.5 L801.8,500.6 L800.5,499.8 L799.1,499.0 L797.8,498.3 L796.4,497.5 L795.0,496.8 L793.5,496.2 L792.1,495.6 L790.7,495.0 L789.2,494.4 L787.7,493.9 L786.1,493.4 L784.6,492.9 L783.0,492.5 L781.4,492.0 L779.9,491.6 L778.3,491.3 L776.7,491.0 L775.2,490.7 L773.7,490.4 L772.2,490.1 L770.7,489.9 L769.2,489.7 L767.7,489.5 L766.1,489.4 L764.6,489.3 L763.1,489.2 L761.6,489.1 L760.0,489.1 L758.5,489.1 L757.0,489.1 L755.5,489.2 L754.0,489.3 L752.5,489.4 L751.0,489.6 L749.5,489.7 L748.0,489.9 L746.5,490.2 L745.0,490.5 L743.6,490.8 L742.1,491.2 L740.7,491.6 L739.2,492.1 L737.7,492.6 L736.2,493.2 L734.8,493.8 L733.3,494.5 L731.8,495.2 L730.4,496.0 L729.0,496.7 L727.6,497.6 L726.2,498.4 L724.8,499.3 L723.5,500.2 L722.3,501.1 L721.1,502.0 L719.9,502.9 L718.8,503.9 L717.6,504.9 L716.5,505.9 L715.3,507.0 L714.2,508.1 L713.2,509.1 L712.1,510.3 L711.1,511.4 L710.1,512.5 L709.1,513.7 L708.2,514.8 L707.2,516.0 L706.3,517.3 L705.4,518.5 L704.5,519.8 L703.6,521.1 L702.8,522.5 L702.0,523.8 L701.2,525.1 L700.5,526.5 L699.8,527.8 L699.2,529.2 L698.6,530.5 L698.0,531.9 L697.5,533.4 L697.0,534.9 L696.6,536.4 L696.3,537.9 L695.9,539.5 L695.7,541.0 L695.4,542.5 L695.3,544.1 L695.1,545.6 L695.1,547.1 L695.0,548.6 L695.0,550.2 L695.1,551.8 L695.3,553.4 L695.5,555.0 L695.7,556.6 L696.0,558.2 L696.4,559.8 L696.8,561.3 L697.2,562.9 L697.7,564.4 L698.2,565.8 L698.8,567.3 L699.4,568.7 L700.1,570.1 L700.8,571.5 L701.5,572.9 L702.3,574.2 L703.1,575.6 L704.0,576.8 L704.8,578.1 L705.8,579.3 L706.7,580.4 L707.8,581.6 L708.8,582.7 L709.9,583.8 L711.0,584.8 L712.2,585.8 L713.3,586.8 L714.5,587.7 L715.7,588.6 L717.0,589.5 L718.3,590.4 L719.7,591.2 L721.1,592.0 L722.5,592.8 L724.0,593.5 L725.4,594.2 L726.8,594.8 L728.2,595.4 L729.8,595.9 L731.4,596.5 L733.0,596.9 L734.7,597.3 L736.2,597.7 L737.8,597.9 L739.2,598.1 L741.1,598.3 L742.9,598.3 L744.6,598.2 L745.9,597.8 L747.2,597.0 L747.7,596.0 L747.0,595.1 L745.6,594.2 L743.9,593.2 L742.7,592.5 L741.5,591.8 L740.1,591.1 L738.6,590.4 L737.2,589.6 L735.7,588.8 L734.3,588.0 L732.9,587.1 L731.6,586.2 L730.2,585.2 L728.8,584.2 L727.4,583.2 L726.1,582.1 L724.8,580.9 L723.7,579.7 L722.6,578.5 L721.7,577.3 L720.8,576.1 L719.9,574.8 L719.0,573.5 L718.3,572.1 L717.5,570.7 L716.8,569.3 L716.2,567.9 L715.7,566.5 L715.2,565.1 L714.7,563.6 L714.3,562.2 L713.9,560.7 L713.6,559.2 L713.4,557.7 L713.1,556.1 L713.0,554.6 L712.8,553.1 L712.7,551.6 L712.7,550.1 L712.7,548.5 L712.7,547.0 L712.8,545.4 L713.0,543.9 L713.2,542.3 L713.4,540.8 L713.7,539.3 L714.1,537.8 L714.5,536.2 L715.0,534.7 L715.5,533.2 L716.1,531.7 L716.7,530.1 L717.4,528.7 L718.1,527.2 L718.9,525.7 L719.7,524.3 L720.5,523.0 L721.4,521.7 L722.3,520.4 L723.3,519.2 L724.3,518.0 L725.3,516.8 L726.4,515.6 L727.5,514.4 L728.6,513.3 L729.8,512.3 L731.0,511.3 L732.2,510.3 L733.5,509.4 L734.7,508.5 L736.1,507.7 L737.4,506.9 L738.8,506.1 L740.2,505.4 L741.6,504.7 L743.0,504.1 L744.5,503.6 L745.9,503.0 L747.4,502.6 L748.9,502.2 L750.4,501.8 L751.9,501.5 L753.4,501.3 L754.9,501.1 L756.5,501.0 L758.0,500.9 L759.6,500.8 L761.2,500.8 L762.7,500.8 L764.2,500.9 L765.8,501.0 L767.4,501.2 L769.0,501.4 L770.7,501.6 L772.3,501.9 L773.9,502.3 L775.5,502.7 L777.1,503.1 L778.6,503.6 L780.2,504.1 L781.7,504.6 L783.2,505.1 L784.6,505.7 L786.0,506.3 L787.4,506.9 L788.9,507.6 L790.3,508.3 L791.6,509.0 L793.0,509.7 L794.3,510.5 L795.7,511.3 L797.0,512.2 L798.2,513.0 L799.5,513.9 L800.8,514.8 L802.0,515.8 L803.2,516.8 L804.4,517.8 L805.6,518.8 L806.7,519.9 L807.9,521.0 L809.0,522.1 L810.0,523.2 L811.1,524.3 L812.1,525.5 L813.1,526.7 L814.1,528.0 L815.0,529.3 L816.0,530.6 L816.9,532.0 L817.7,533.3 L818.6,534.7 L819.4,536.0 L820.1,537.4 L820.8,538.7 L821.5,540.0 L822.3,541.5 L822.9,543.0 L823.5,544.6 L824.1,546.1 L824.6,547.6 L825.1,549.0 L825.6,550.2 L826.1,551.4 L826.8,553.2 L827.5,554.7 L828.4,555.7 L829.9,556.0 L831.5,556.0Z"/><path d="M825.1,503.9 L825.2,503.5 L825.0,502.5 L824.6,501.1 L824.0,499.5 L823.3,497.6 L822.5,495.6 L821.6,493.7 L820.8,491.8 L820.1,490.1 L819.5,488.8 L818.9,487.4 L818.2,486.1 L817.6,484.8 L816.9,483.4 L816.2,482.1 L815.5,480.7 L814.8,479.4 L814.1,478.0 L813.3,476.5 L812.6,475.1 L811.9,473.8 L811.3,472.4 L810.6,471.0 L809.9,469.6 L809.2,468.1 L808.5,466.7 L807.8,465.2 L807.1,463.7 L806.4,462.3 L805.7,460.8 L804.9,459.3 L804.2,457.9 L803.4,456.4 L802.6,455.0 L801.8,453.6 L801.1,452.3 L800.3,450.9 L799.5,449.6 L798.7,448.2 L797.9,446.8 L797.1,445.5 L796.3,444.1 L795.4,442.8 L794.5,441.5 L793.7,440.1 L792.8,438.8 L791.9,437.5 L790.9,436.3 L790.0,435.0 L789.0,433.8 L788.0,432.5 L787.0,431.3 L786.0,430.1 L784.9,429.0 L783.9,427.8 L782.8,426.6 L781.7,425.5 L780.6,424.3 L779.5,423.2 L778.3,422.1 L777.2,420.9 L776.1,419.8 L774.9,418.6 L773.8,417.5 L772.7,416.4 L771.7,415.4 L770.6,414.3 L769.4,413.2 L768.3,412.1 L767.2,411.0 L766.0,409.9 L764.9,408.8 L763.7,407.7 L762.6,406.7 L761.5,405.6 L760.3,404.6 L759.2,403.6 L758.1,402.7 L757.1,401.7 L756.0,400.8 L755.0,400.0 L753.6,398.8 L752.2,397.6 L750.8,396.4 L749.4,395.3 L748.1,394.2 L746.8,393.3 L745.5,392.4 L744.2,391.8 L743.0,391.3 L741.0,390.9 L739.0,390.7 L737.2,390.9 L736.0,391.5 L735.3,392.6 L735.2,394.2 L735.5,396.0 L735.8,396.9 L736.3,397.9 L736.9,399.1 L737.6,400.3 L738.4,401.5 L739.3,402.9 L740.3,404.2 L741.3,405.6 L742.4,407.0 L743.5,408.4 L744.6,409.8 L745.7,411.2 L746.8,412.5 L747.8,413.8 L748.8,415.0 L749.8,416.2 L750.8,417.5 L751.9,418.7 L752.9,419.8 L753.9,421.0 L755.0,422.1 L756.0,423.2 L757.1,424.4 L758.2,425.5 L759.2,426.6 L760.3,427.7 L761.4,428.9 L762.5,430.0 L763.5,431.1 L764.6,432.2 L765.7,433.2 L766.8,434.3 L767.9,435.4 L769.0,436.5 L770.0,437.5 L771.1,438.6 L772.2,439.7 L773.3,440.8 L774.4,441.9 L775.5,442.9 L776.6,444.0 L777.6,445.1 L778.7,446.2 L779.8,447.4 L780.9,448.5 L781.9,449.6 L783.0,450.8 L784.1,451.9 L785.1,453.0 L786.2,454.2 L787.2,455.3 L788.3,456.5 L789.3,457.7 L790.3,458.9 L791.3,460.1 L792.2,461.3 L793.2,462.5 L794.1,463.7 L795.0,465.0 L795.9,466.3 L796.8,467.5 L797.7,468.8 L798.6,470.1 L799.4,471.4 L800.3,472.6 L801.2,473.9 L802.1,475.2 L802.9,476.4 L803.8,477.6 L804.8,478.9 L805.7,480.2 L806.7,481.5 L807.6,482.8 L808.5,484.1 L809.5,485.3 L810.4,486.6 L811.4,487.8 L812.3,489.1 L813.2,490.3 L814.2,491.4 L815.1,492.6 L816.2,493.9 L817.4,495.4 L818.6,496.9 L819.8,498.5 L821.1,500.0 L822.2,501.3 L823.2,502.4 L824.1,503.3 L824.7,503.8Z"/></g><g transform="matrix(-1,0,0,1,1663,0)"><path d="M588.0,463.0 L586.5,463.4 L585.0,463.9 L583.5,464.3 L582.0,464.7 L580.5,465.2 L579.1,465.6 L577.6,466.1 L576.1,466.6 L574.6,467.2 L573.2,467.7 L571.8,468.4 L570.3,469.0 L568.9,469.6 L567.5,470.2 L566.0,470.8 L564.5,471.4 L563.1,471.9 L561.6,472.4 L560.1,473.0 L558.7,473.5 L557.2,474.0 L555.7,474.5 L554.1,474.9 L552.6,475.3 L551.1,475.7 L549.6,476.0 L548.0,476.4 L546.5,476.6 L544.9,476.9 L543.3,477.1 L541.7,477.3 L540.2,477.5 L538.6,477.6 L537.0,477.7 L535.4,477.7 L533.8,477.7 L532.2,477.7 L530.6,477.6 L529.0,477.6 L527.4,477.4 L525.8,477.2 L524.2,477.0 L522.6,476.7 L521.1,476.4 L519.6,476.0 L518.0,475.6 L516.5,475.2 L515.0,474.7 L513.5,474.2 L512.0,473.7 L510.5,473.1 L509.0,472.4 L507.6,471.7 L506.3,471.0 L504.9,470.2 L503.6,469.4 L502.3,468.5 L501.0,467.7 L499.7,466.7 L498.5,465.7 L497.2,464.7 L496.1,463.7 L494.9,462.6 L493.8,461.5 L492.8,460.4 L491.7,459.2 L490.7,457.9 L489.7,456.6 L488.7,455.3 L487.8,454.0 L487.0,452.6 L486.1,451.2 L485.3,449.8 L484.6,448.4 L484.0,447.0 L483.3,445.5 L482.8,444.0 L482.2,442.4 L481.7,440.9 L481.3,439.3 L480.9,437.7 L480.6,436.1 L480.3,434.5 L480.1,432.9 L479.9,431.3 L479.7,429.7 L479.6,428.2 L479.6,426.6 L479.6,425.0 L479.7,423.4 L479.8,421.8 L479.9,420.2 L480.1,418.6 L480.4,417.1 L480.7,415.5 L481.0,414.0 L481.4,412.5 L481.9,411.0 L482.5,409.4 L483.1,407.9 L483.8,406.4 L484.5,405.0 L485.3,403.5 L486.1,402.1 L486.9,400.8 L487.8,399.4 L488.8,398.1 L489.7,396.9 L490.7,395.8 L491.8,394.6 L492.9,393.5 L494.0,392.5 L495.2,391.4 L496.4,390.4 L497.6,389.5 L498.8,388.6 L500.1,387.7 L501.4,386.8 L502.9,386.0 L504.3,385.2 L505.8,384.4 L507.3,383.7 L508.8,383.1 L510.3,382.5 L511.8,381.9 L513.2,381.3 L514.9,380.7 L516.6,380.2 L518.3,379.7 L519.9,379.3 L521.5,378.9 L523.0,378.5 L524.4,378.0 L526.4,377.4 L528.2,376.8 L529.2,376.0 L529.2,375.0 L528.7,374.0 L527.7,373.2 L526.2,372.6 L524.4,372.0 L522.6,371.5 L521.2,371.2 L519.8,370.9 L518.2,370.7 L516.6,370.5 L514.9,370.3 L513.2,370.3 L511.5,370.3 L509.8,370.4 L508.3,370.5 L506.7,370.7 L505.1,371.0 L503.5,371.3 L501.9,371.6 L500.3,372.1 L498.7,372.5 L497.2,373.1 L495.6,373.7 L494.1,374.3 L492.7,375.0 L491.3,375.7 L490.0,376.5 L488.6,377.4 L487.2,378.3 L485.9,379.2 L484.6,380.2 L483.3,381.2 L482.1,382.2 L480.9,383.3 L479.7,384.4 L478.7,385.4 L477.6,386.5 L476.6,387.6 L475.6,388.8 L474.7,390.0 L473.7,391.2 L472.8,392.4 L471.9,393.6 L471.1,394.9 L470.3,396.2 L469.5,397.5 L468.8,398.8 L468.1,400.2 L467.4,401.7 L466.7,403.2 L466.1,404.7 L465.5,406.3 L465.0,407.8 L464.5,409.4 L464.1,411.0 L463.7,412.5 L463.4,414.1 L463.1,415.7 L462.9,417.2 L462.7,418.7 L462.6,420.2 L462.5,421.7 L462.5,423.3 L462.5,424.8 L462.5,426.3 L462.6,427.8 L462.8,429.3 L463.0,430.8 L463.2,432.3 L463.5,433.9 L463.9,435.4 L464.4,437.0 L464.9,438.6 L465.4,440.1 L466.0,441.6 L466.7,443.2 L467.4,444.7 L468.1,446.1 L468.9,447.6 L469.7,449.0 L470.5,450.4 L471.4,451.7 L472.4,453.1 L473.3,454.4 L474.3,455.7 L475.3,457.0 L476.4,458.3 L477.5,459.6 L478.6,460.8 L479.7,462.0 L480.8,463.1 L481.9,464.1 L483.0,465.2 L484.2,466.3 L485.4,467.3 L486.6,468.3 L487.8,469.3 L489.1,470.2 L490.3,471.2 L491.6,472.0 L492.8,472.9 L494.1,473.7 L495.5,474.5 L496.8,475.3 L498.2,476.1 L499.6,476.8 L501.1,477.5 L502.5,478.1 L503.9,478.7 L505.4,479.3 L506.8,479.8 L508.3,480.3 L509.8,480.8 L511.4,481.2 L513.0,481.6 L514.6,481.9 L516.2,482.2 L517.8,482.4 L519.4,482.6 L521.1,482.7 L522.7,482.8 L524.4,482.9 L526.1,483.0 L527.6,482.9 L529.3,482.9 L530.9,482.8 L532.5,482.7 L534.1,482.5 L535.8,482.3 L537.4,482.1 L539.0,481.8 L540.7,481.5 L542.3,481.2 L543.9,480.9 L545.4,480.6 L547.0,480.2 L548.6,479.8 L550.2,479.4 L551.7,479.0 L553.3,478.5 L554.8,478.0 L556.3,477.6 L557.8,477.1 L559.3,476.6 L560.8,476.1 L562.3,475.6 L563.9,475.1 L565.4,474.6 L566.9,474.0 L568.3,473.5 L569.8,473.0 L571.3,472.4 L572.7,471.9 L574.1,471.4 L575.7,471.0 L577.2,470.5 L578.6,470.1 L580.1,469.7 L581.6,469.3 L583.1,468.8 L584.5,468.4 L586.0,468.0Z"/><path d="M831.5,556.0 L831.3,554.5 L831.0,552.9 L830.8,551.4 L830.5,549.7 L830.2,548.4 L829.9,547.0 L829.6,545.6 L829.2,544.1 L828.9,542.6 L828.5,541.0 L828.1,539.5 L827.6,537.9 L827.2,536.4 L826.7,534.9 L826.3,533.4 L825.8,531.9 L825.2,530.3 L824.7,528.7 L824.1,527.1 L823.5,525.6 L822.9,524.0 L822.2,522.4 L821.6,521.0 L821.0,519.6 L820.3,518.2 L819.6,516.8 L818.9,515.4 L818.2,514.0 L817.5,512.6 L816.7,511.2 L815.9,509.8 L815.1,508.4 L814.3,507.0 L813.5,505.6 L812.7,504.3 L811.8,503.1 L811.0,501.8 L810.1,500.5 L809.3,499.3 L808.4,498.0 L807.5,496.7 L806.6,495.5 L805.6,494.2 L804.7,493.0 L803.7,491.7 L802.7,490.5 L801.7,489.3 L800.6,488.1 L799.6,487.0 L798.7,485.8 L797.6,484.7 L796.6,483.6 L795.6,482.5 L794.5,481.4 L793.4,480.3 L792.3,479.3 L791.2,478.2 L790.1,477.1 L789.0,476.1 L787.8,475.0 L786.7,474.0 L785.5,472.9 L784.3,471.9 L783.1,470.9 L781.9,469.9 L780.8,469.0 L779.6,468.0 L778.4,467.1 L777.1,466.1 L775.9,465.2 L774.6,464.3 L773.4,463.3 L772.1,462.4 L770.8,461.5 L769.5,460.6 L768.2,459.8 L766.9,458.9 L765.6,458.0 L764.2,457.2 L762.9,456.3 L761.5,455.5 L760.2,454.7 L758.9,453.9 L757.6,453.2 L756.2,452.4 L754.9,451.6 L753.5,450.9 L752.2,450.2 L750.8,449.4 L749.4,448.7 L748.0,448.0 L746.6,447.3 L745.2,446.7 L743.8,446.0 L742.4,445.3 L741.0,444.7 L739.6,444.1 L738.2,443.5 L736.8,442.9 L735.3,442.3 L733.9,441.7 L732.5,441.2 L731.0,440.6 L729.5,440.1 L728.0,439.6 L726.5,439.1 L725.0,438.6 L723.5,438.1 L722.0,437.6 L720.5,437.2 L719.0,436.7 L717.5,436.3 L716.0,435.9 L714.5,435.5 L713.0,435.2 L711.5,434.8 L710.0,434.4 L708.5,434.1 L707.0,433.8 L705.5,433.5 L703.9,433.2 L702.4,432.9 L700.9,432.6 L699.4,432.3 L697.8,432.1 L696.3,431.8 L694.8,431.6 L693.3,431.4 L691.8,431.2 L690.2,431.0 L688.7,430.9 L687.2,430.7 L685.7,430.6 L684.2,430.5 L682.7,430.4 L681.2,430.3 L679.7,430.2 L678.1,430.1 L676.5,430.1 L674.9,430.0 L673.3,430.0 L671.8,430.0 L670.2,430.0 L668.6,430.1 L667.1,430.1 L665.5,430.2 L664.0,430.3 L662.4,430.4 L660.9,430.5 L659.3,430.7 L657.8,430.9 L656.2,431.1 L654.7,431.3 L653.1,431.5 L651.6,431.8 L650.1,432.1 L648.5,432.4 L647.0,432.7 L645.5,433.0 L643.9,433.4 L642.4,433.8 L640.9,434.1 L639.4,434.6 L637.8,435.0 L636.3,435.4 L634.8,435.9 L633.4,436.3 L631.9,436.8 L630.5,437.3 L629.1,437.8 L627.7,438.3 L626.3,438.9 L624.8,439.4 L623.4,440.0 L622.0,440.6 L620.6,441.2 L619.2,441.8 L617.8,442.4 L616.4,443.0 L615.0,443.7 L613.6,444.3 L612.2,445.0 L610.9,445.6 L609.5,446.3 L608.2,447.0 L606.8,447.7 L605.5,448.4 L604.1,449.1 L602.8,449.8 L601.4,450.5 L600.1,451.3 L598.8,452.0 L597.4,452.8 L596.1,453.6 L594.8,454.4 L593.6,455.2 L592.3,456.0 L591.1,456.8 L589.8,457.6 L588.6,458.4 L587.4,459.3 L586.1,460.2 L584.8,461.1 L583.6,462.0 L582.4,462.9 L581.2,463.9 L580.0,464.8 L578.8,465.8 L577.6,466.7 L576.5,467.7 L575.4,468.7 L574.3,469.7 L573.2,470.8 L572.1,471.8 L571.1,472.9 L570.0,474.1 L569.0,475.2 L567.9,476.4 L566.9,477.7 L565.9,478.9 L565.0,480.2 L564.0,481.4 L563.1,482.7 L562.2,484.0 L561.3,485.3 L560.5,486.7 L559.6,488.0 L558.8,489.4 L558.0,490.8 L557.2,492.1 L556.5,493.4 L555.8,494.8 L555.1,496.2 L554.4,497.6 L553.7,499.0 L553.1,500.4 L552.5,501.9 L551.8,503.3 L551.2,504.8 L550.7,506.2 L550.1,507.7 L549.6,509.1 L549.0,510.5 L548.5,512.0 L548.0,513.5 L547.5,514.9 L547.0,516.4 L546.6,517.9 L546.2,519.4 L545.7,521.0 L545.3,522.5 L544.9,524.0 L544.6,525.5 L544.2,526.9 L543.9,528.4 L543.6,529.9 L543.3,531.3 L543.0,532.7 L542.7,534.4 L542.4,536.1 L542.1,537.7 L541.8,539.4 L541.6,541.0 L541.4,542.6 L541.2,544.2 L541.1,545.8 L541.0,547.4 L540.9,549.0 L540.9,550.6 L540.9,552.3 L541.0,553.9 L541.1,555.5 L541.2,557.1 L541.4,558.7 L541.6,560.4 L541.8,562.0 L542.1,563.7 L542.4,565.1 L542.7,566.6 L543.0,568.0 L543.3,569.5 L543.7,571.0 L544.1,572.5 L544.5,574.0 L545.0,575.5 L545.5,576.9 L546.0,578.4 L546.5,579.9 L547.1,581.3 L547.7,582.7 L548.3,584.1 L548.9,585.5 L549.6,586.9 L550.3,588.3 L551.0,589.7 L551.7,591.1 L552.5,592.5 L553.3,593.8 L554.1,595.2 L554.9,596.5 L555.8,597.8 L556.7,599.0 L557.6,600.2 L558.5,601.4 L559.5,602.6 L560.4,603.7 L561.4,604.9 L562.4,606.0 L563.5,607.1 L564.5,608.2 L565.6,609.3 L566.7,610.3 L567.8,611.4 L569.0,612.4 L570.1,613.4 L571.3,614.4 L572.5,615.4 L573.7,616.4 L575.0,617.4 L576.3,618.3 L577.5,619.3 L578.9,620.2 L580.2,621.1 L581.5,622.0 L582.9,622.9 L584.3,623.7 L585.7,624.5 L587.0,625.3 L588.4,626.1 L589.8,626.8 L591.2,627.6 L592.6,628.3 L594.1,629.0 L595.5,629.6 L597.0,630.3 L598.4,630.9 L599.9,631.5 L601.4,632.1 L602.9,632.6 L604.4,633.2 L605.8,633.7 L607.3,634.2 L608.8,634.6 L610.2,635.0 L611.8,635.5 L613.4,635.9 L615.0,636.3 L616.6,636.6 L618.2,636.9 L619.8,637.2 L621.4,637.5 L623.0,637.7 L624.5,637.9 L626.1,638.1 L627.6,638.2 L629.0,638.3 L630.8,638.5 L632.6,638.5 L634.4,638.5 L636.2,638.5 L637.9,638.5 L639.5,638.4 L641.0,638.2 L642.5,638.1 L644.5,637.8 L646.4,637.5 L648.1,637.1 L649.5,636.6 L650.7,635.6 L651.2,634.6 L650.6,633.9 L649.2,633.1 L647.5,632.3 L645.6,631.5 L644.5,631.1 L643.3,630.6 L642.0,630.1 L640.6,629.6 L639.2,629.0 L637.7,628.5 L636.2,628.0 L634.7,627.4 L633.1,626.8 L631.6,626.2 L630.1,625.5 L628.7,624.9 L627.4,624.3 L625.9,623.7 L624.5,623.0 L623.1,622.4 L621.6,621.7 L620.2,621.0 L618.7,620.3 L617.2,619.5 L615.8,618.8 L614.4,618.0 L613.0,617.3 L611.6,616.5 L610.2,615.7 L608.9,614.9 L607.5,614.0 L606.2,613.2 L604.9,612.3 L603.6,611.5 L602.3,610.6 L601.0,609.7 L599.7,608.8 L598.4,607.8 L597.2,606.9 L596.0,605.9 L594.8,605.0 L593.6,604.0 L592.5,603.0 L591.3,601.9 L590.2,600.9 L589.0,599.8 L587.9,598.7 L586.8,597.6 L585.8,596.5 L584.7,595.3 L583.7,594.2 L582.7,593.0 L581.7,591.8 L580.8,590.6 L579.9,589.4 L579.0,588.2 L578.1,586.9 L577.3,585.5 L576.4,584.1 L575.6,582.7 L574.9,581.3 L574.1,579.9 L573.4,578.5 L572.8,577.0 L572.1,575.6 L571.5,574.1 L570.9,572.7 L570.4,571.2 L569.9,569.8 L569.4,568.2 L569.0,566.7 L568.5,565.1 L568.2,563.6 L567.8,562.0 L567.5,560.5 L567.2,559.0 L567.0,557.5 L566.8,556.0 L566.6,554.6 L566.4,553.0 L566.2,551.4 L566.1,549.9 L566.1,548.4 L566.0,546.9 L566.0,545.4 L566.1,544.0 L566.2,542.6 L566.4,541.0 L566.6,539.5 L566.9,538.0 L567.2,536.5 L567.6,535.0 L568.0,533.4 L568.4,532.1 L568.9,530.8 L569.4,529.4 L569.9,528.0 L570.4,526.6 L571.0,525.2 L571.6,523.8 L572.3,522.3 L573.0,520.9 L573.6,519.5 L574.3,518.1 L575.0,516.7 L575.7,515.3 L576.4,513.9 L577.2,512.5 L577.9,511.0 L578.8,509.6 L579.6,508.2 L580.4,506.7 L581.3,505.3 L582.2,503.9 L583.0,502.7 L583.8,501.5 L584.7,500.3 L585.5,499.0 L586.4,497.8 L587.3,496.6 L588.2,495.4 L589.1,494.2 L590.0,493.0 L591.0,491.8 L592.0,490.6 L593.0,489.5 L594.0,488.3 L595.0,487.2 L596.0,486.0 L597.1,484.9 L598.2,483.8 L599.3,482.7 L600.4,481.6 L601.5,480.6 L602.7,479.5 L603.8,478.4 L605.0,477.4 L606.2,476.3 L607.4,475.3 L608.7,474.3 L609.9,473.3 L611.1,472.3 L612.4,471.4 L613.7,470.4 L614.9,469.5 L616.2,468.6 L617.5,467.7 L618.8,466.8 L620.2,465.9 L621.5,465.1 L622.9,464.2 L624.2,463.4 L625.6,462.6 L627.0,461.8 L628.4,461.0 L629.8,460.2 L631.2,459.5 L632.6,458.7 L634.0,458.0 L635.4,457.4 L636.8,456.7 L638.2,456.1 L639.6,455.4 L641.1,454.8 L642.5,454.2 L643.9,453.7 L645.3,453.1 L646.8,452.6 L648.2,452.1 L649.7,451.6 L651.1,451.1 L652.6,450.7 L654.0,450.3 L655.5,449.9 L657.0,449.5 L658.5,449.1 L659.9,448.8 L661.4,448.5 L662.9,448.2 L664.4,447.9 L665.9,447.7 L667.4,447.5 L668.9,447.3 L670.5,447.1 L672.0,446.9 L673.5,446.8 L675.0,446.7 L676.6,446.6 L678.1,446.5 L679.7,446.5 L681.2,446.4 L682.7,446.4 L684.2,446.4 L685.7,446.5 L687.2,446.5 L688.7,446.6 L690.2,446.7 L691.7,446.8 L693.2,446.9 L694.8,447.0 L696.3,447.2 L697.8,447.4 L699.4,447.6 L700.9,447.8 L702.4,448.0 L703.9,448.2 L705.5,448.5 L707.0,448.8 L708.5,449.1 L710.0,449.4 L711.5,449.7 L713.0,450.0 L714.5,450.4 L716.0,450.8 L717.5,451.2 L719.0,451.6 L720.5,452.0 L722.0,452.5 L723.5,452.9 L725.0,453.4 L726.5,453.9 L728.0,454.4 L729.5,454.9 L731.0,455.4 L732.5,456.0 L733.9,456.5 L735.3,457.1 L736.8,457.6 L738.2,458.2 L739.6,458.8 L741.0,459.4 L742.4,460.1 L743.8,460.7 L745.2,461.4 L746.6,462.0 L748.0,462.7 L749.4,463.4 L750.8,464.1 L752.1,464.8 L753.5,465.5 L754.9,466.2 L756.2,467.0 L757.6,467.7 L758.9,468.4 L760.2,469.2 L761.5,469.9 L762.9,470.7 L764.2,471.5 L765.5,472.3 L766.9,473.2 L768.2,474.0 L769.5,474.8 L770.8,475.7 L772.1,476.5 L773.4,477.4 L774.6,478.2 L775.9,479.1 L777.1,480.0 L778.4,480.9 L779.6,481.7 L780.8,482.6 L781.9,483.5 L783.1,484.4 L784.4,485.4 L785.7,486.4 L787.0,487.4 L788.3,488.4 L789.6,489.4 L790.8,490.5 L792.0,491.5 L793.2,492.5 L794.4,493.6 L795.6,494.6 L796.7,495.7 L797.8,496.7 L798.9,497.8 L799.9,498.9 L801.1,500.1 L802.3,501.3 L803.4,502.5 L804.5,503.7 L805.6,504.9 L806.6,506.1 L807.6,507.4 L808.6,508.6 L809.5,509.9 L810.5,511.2 L811.4,512.5 L812.2,513.8 L813.1,515.1 L813.9,516.5 L814.6,517.8 L815.4,519.2 L816.1,520.6 L816.8,522.0 L817.5,523.4 L818.2,524.9 L818.9,526.3 L819.5,527.7 L820.2,529.1 L820.8,530.5 L821.4,531.9 L822.0,533.4 L822.5,534.8 L823.1,536.2 L823.7,537.7 L824.2,539.1 L824.8,540.5 L825.3,541.9 L825.9,543.2 L826.5,544.7 L827.1,546.2 L827.8,547.6 L828.4,549.0 L829.0,550.4 L829.6,551.8 L830.3,553.2 L830.9,554.6 L831.5,556.0Z"/><path d="M541.0,548.0 L540.6,549.8 L540.3,551.5 L539.9,553.3 L539.3,555.2 L538.9,556.6 L538.4,558.1 L537.9,559.6 L537.4,561.1 L536.8,562.7 L536.1,564.3 L535.4,565.9 L534.6,567.5 L534.0,568.8 L533.3,570.1 L532.5,571.5 L531.8,572.8 L531.0,574.2 L530.1,575.5 L529.3,576.9 L528.4,578.2 L527.4,579.5 L526.5,580.7 L525.5,581.9 L524.4,583.1 L523.3,584.3 L522.2,585.5 L521.1,586.7 L519.9,587.8 L518.7,588.9 L517.5,590.0 L516.2,591.0 L514.9,592.1 L513.6,593.0 L512.2,594.0 L510.9,594.8 L509.6,595.7 L508.2,596.5 L506.8,597.2 L505.4,598.0 L504.0,598.7 L502.6,599.4 L501.1,600.0 L499.6,600.6 L498.1,601.2 L496.6,601.7 L495.1,602.2 L493.6,602.7 L492.1,603.1 L490.6,603.5 L489.1,603.9 L487.6,604.2 L486.0,604.5 L484.5,604.8 L482.9,605.1 L481.4,605.3 L479.8,605.4 L478.3,605.6 L476.7,605.7 L475.2,605.7 L473.6,605.7 L472.0,605.7 L470.4,605.6 L468.8,605.5 L467.2,605.4 L465.5,605.2 L463.9,605.0 L462.4,604.7 L460.8,604.4 L459.3,604.0 L457.7,603.6 L456.3,603.1 L454.8,602.6 L453.3,602.1 L451.8,601.4 L450.3,600.8 L448.9,600.0 L447.5,599.3 L446.1,598.5 L444.7,597.6 L443.4,596.7 L442.1,595.8 L440.9,594.9 L439.8,593.9 L438.6,592.9 L437.5,591.8 L436.5,590.7 L435.5,589.6 L434.5,588.4 L433.5,587.2 L432.6,586.0 L431.7,584.8 L430.9,583.5 L430.1,582.2 L429.3,580.8 L428.5,579.3 L427.8,577.9 L427.1,576.3 L426.5,574.8 L425.9,573.2 L425.4,571.6 L424.9,570.1 L424.5,568.5 L424.1,566.9 L423.8,565.3 L423.5,563.8 L423.2,562.2 L423.0,560.5 L422.9,558.9 L422.8,557.3 L422.7,555.7 L422.7,554.1 L422.8,552.5 L422.9,551.0 L423.1,549.3 L423.3,547.6 L423.6,546.0 L424.0,544.3 L424.4,542.7 L424.9,541.1 L425.5,539.5 L426.1,538.0 L426.8,536.5 L427.6,535.1 L428.4,533.7 L429.3,532.4 L430.2,531.1 L431.3,529.8 L432.3,528.6 L433.5,527.4 L434.6,526.3 L435.8,525.2 L437.0,524.3 L438.3,523.4 L439.7,522.5 L441.1,521.7 L442.5,521.0 L444.0,520.3 L445.4,519.7 L446.9,519.1 L448.4,518.6 L449.9,518.3 L451.5,517.9 L453.0,517.7 L454.6,517.5 L456.2,517.3 L457.8,517.2 L459.4,517.2 L461.0,517.3 L462.6,517.5 L464.1,517.7 L465.7,517.9 L467.2,518.3 L468.8,518.7 L470.3,519.1 L471.8,519.7 L473.3,520.3 L474.7,520.9 L476.1,521.6 L477.4,522.4 L478.8,523.3 L480.0,524.3 L481.3,525.3 L482.5,526.4 L483.7,527.5 L484.8,528.6 L485.9,529.7 L487.0,530.8 L488.1,532.1 L489.2,533.5 L490.2,535.0 L491.2,536.4 L492.2,537.7 L493.1,538.8 L493.9,539.6 L495.6,540.6 L496.9,540.8 L497.3,539.9 L497.3,538.4 L497.1,536.5 L496.9,534.7 L496.6,533.4 L496.3,532.0 L495.9,530.5 L495.4,529.0 L494.9,527.5 L494.3,526.0 L493.6,524.5 L492.9,523.2 L492.1,521.8 L491.3,520.5 L490.4,519.1 L489.4,517.8 L488.4,516.5 L487.4,515.2 L486.3,514.0 L485.1,512.9 L484.0,511.9 L482.8,510.9 L481.6,509.9 L480.3,509.0 L478.9,508.1 L477.6,507.2 L476.2,506.4 L474.8,505.7 L473.3,505.0 L471.9,504.5 L470.4,503.9 L468.9,503.4 L467.4,503.0 L465.8,502.7 L464.2,502.4 L462.7,502.1 L461.1,501.9 L459.5,501.8 L457.9,501.8 L456.3,501.8 L454.8,501.8 L453.3,501.9 L451.8,502.1 L450.3,502.3 L448.8,502.5 L447.3,502.8 L445.8,503.2 L444.3,503.6 L442.9,504.0 L441.4,504.5 L440.0,505.1 L438.6,505.7 L437.1,506.4 L435.7,507.1 L434.3,507.9 L432.8,508.7 L431.5,509.6 L430.1,510.5 L428.8,511.4 L427.5,512.5 L426.2,513.5 L425.0,514.6 L423.8,515.6 L422.7,516.8 L421.7,517.9 L420.6,519.2 L419.6,520.4 L418.6,521.7 L417.6,523.0 L416.7,524.3 L415.8,525.7 L414.9,527.1 L414.1,528.5 L413.4,529.9 L412.7,531.3 L412.1,532.7 L411.4,534.1 L410.9,535.6 L410.3,537.0 L409.8,538.5 L409.3,540.0 L408.9,541.6 L408.5,543.1 L408.1,544.6 L407.8,546.1 L407.6,547.7 L407.3,549.2 L407.2,550.7 L407.0,552.2 L406.9,553.7 L406.9,555.3 L406.9,556.8 L406.9,558.4 L407.0,560.0 L407.1,561.5 L407.2,563.0 L407.4,564.6 L407.7,566.1 L407.9,567.6 L408.2,569.0 L408.6,570.6 L409.1,572.1 L409.5,573.6 L410.1,575.1 L410.6,576.6 L411.2,578.1 L411.9,579.6 L412.6,581.0 L413.3,582.4 L414.1,583.8 L414.9,585.2 L415.8,586.5 L416.7,587.8 L417.6,589.0 L418.6,590.2 L419.6,591.4 L420.6,592.6 L421.7,593.8 L422.8,594.9 L424.0,596.0 L425.2,597.0 L426.4,598.0 L427.6,599.0 L428.9,600.0 L430.1,600.9 L431.3,601.7 L432.6,602.6 L434.0,603.4 L435.3,604.1 L436.7,604.9 L438.0,605.6 L439.5,606.3 L440.9,606.9 L442.3,607.6 L443.7,608.2 L445.2,608.8 L446.6,609.3 L448.1,609.8 L449.6,610.3 L451.1,610.8 L452.7,611.2 L454.2,611.7 L455.8,612.0 L457.3,612.4 L458.9,612.7 L460.5,613.0 L462.1,613.3 L463.6,613.5 L465.2,613.7 L466.8,613.8 L468.3,613.9 L469.8,614.0 L471.4,614.0 L472.9,614.0 L474.5,614.0 L476.0,613.9 L477.5,613.9 L479.1,613.7 L480.6,613.6 L482.1,613.4 L483.6,613.2 L485.1,612.9 L486.6,612.6 L488.1,612.3 L489.6,611.9 L491.1,611.5 L492.5,611.1 L494.0,610.6 L495.5,610.1 L496.9,609.5 L498.3,609.0 L499.8,608.4 L501.2,607.7 L502.6,607.1 L503.9,606.4 L505.3,605.7 L506.6,605.0 L508.0,604.2 L509.3,603.4 L510.6,602.6 L511.9,601.7 L513.2,600.8 L514.5,599.9 L515.7,599.0 L516.9,598.0 L518.1,597.0 L519.3,596.0 L520.4,595.0 L521.5,594.0 L522.7,592.9 L523.8,591.7 L524.9,590.5 L525.9,589.3 L527.0,588.1 L528.0,586.8 L528.9,585.5 L529.9,584.2 L530.8,582.9 L531.7,581.6 L532.5,580.3 L533.3,578.9 L534.1,577.5 L534.8,576.0 L535.5,574.6 L536.2,573.1 L536.8,571.6 L537.4,570.1 L537.9,568.5 L538.4,567.0 L538.9,565.5 L539.4,563.9 L539.8,562.4 L540.3,560.9 L540.6,559.3 L540.9,557.8 L541.2,556.3 L541.5,554.7 L541.8,553.2 L542.0,551.7 L542.2,550.1 L542.5,548.6 L542.7,547.0 L543.0,545.5Z"/><path d="M816.0,514.0 L815.0,512.9 L814.0,511.8 L813.0,510.6 L812.0,509.5 L811.0,508.4 L810.0,507.3 L808.9,506.2 L807.8,505.2 L806.6,504.2 L805.5,503.3 L804.3,502.4 L803.0,501.5 L801.8,500.6 L800.5,499.8 L799.1,499.0 L797.8,498.3 L796.4,497.5 L795.0,496.8 L793.5,496.2 L792.1,495.6 L790.7,495.0 L789.2,494.4 L787.7,493.9 L786.1,493.4 L784.6,492.9 L783.0,492.5 L781.4,492.0 L779.9,491.6 L778.3,491.3 L776.7,491.0 L775.2,490.7 L773.7,490.4 L772.2,490.1 L770.7,489.9 L769.2,489.7 L767.7,489.5 L766.1,489.4 L764.6,489.3 L763.1,489.2 L761.6,489.1 L760.0,489.1 L758.5,489.1 L757.0,489.1 L755.5,489.2 L754.0,489.3 L752.5,489.4 L751.0,489.6 L749.5,489.7 L748.0,489.9 L746.5,490.2 L745.0,490.5 L743.6,490.8 L742.1,491.2 L740.7,491.6 L739.2,492.1 L737.7,492.6 L736.2,493.2 L734.8,493.8 L733.3,494.5 L731.8,495.2 L730.4,496.0 L729.0,496.7 L727.6,497.6 L726.2,498.4 L724.8,499.3 L723.5,500.2 L722.3,501.1 L721.1,502.0 L719.9,502.9 L718.8,503.9 L717.6,504.9 L716.5,505.9 L715.3,507.0 L714.2,508.1 L713.2,509.1 L712.1,510.3 L711.1,511.4 L710.1,512.5 L709.1,513.7 L708.2,514.8 L707.2,516.0 L706.3,517.3 L705.4,518.5 L704.5,519.8 L703.6,521.1 L702.8,522.5 L702.0,523.8 L701.2,525.1 L700.5,526.5 L699.8,527.8 L699.2,529.2 L698.6,530.5 L698.0,531.9 L697.5,533.4 L697.0,534.9 L696.6,536.4 L696.3,537.9 L695.9,539.5 L695.7,541.0 L695.4,542.5 L695.3,544.1 L695.1,545.6 L695.1,547.1 L695.0,548.6 L695.0,550.2 L695.1,551.8 L695.3,553.4 L695.5,555.0 L695.7,556.6 L696.0,558.2 L696.4,559.8 L696.8,561.3 L697.2,562.9 L697.7,564.4 L698.2,565.8 L698.8,567.3 L699.4,568.7 L700.1,570.1 L700.8,571.5 L701.5,572.9 L702.3,574.2 L703.1,575.6 L704.0,576.8 L704.8,578.1 L705.8,579.3 L706.7,580.4 L707.8,581.6 L708.8,582.7 L709.9,583.8 L711.0,584.8 L712.2,585.8 L713.3,586.8 L714.5,587.7 L715.7,588.6 L717.0,589.5 L718.3,590.4 L719.7,591.2 L721.1,592.0 L722.5,592.8 L724.0,593.5 L725.4,594.2 L726.8,594.8 L728.2,595.4 L729.8,595.9 L731.4,596.5 L733.0,596.9 L734.7,597.3 L736.2,597.7 L737.8,597.9 L739.2,598.1 L741.1,598.3 L742.9,598.3 L744.6,598.2 L745.9,597.8 L747.2,597.0 L747.7,596.0 L747.0,595.1 L745.6,594.2 L743.9,593.2 L742.7,592.5 L741.5,591.8 L740.1,591.1 L738.6,590.4 L737.2,589.6 L735.7,588.8 L734.3,588.0 L732.9,587.1 L731.6,586.2 L730.2,585.2 L728.8,584.2 L727.4,583.2 L726.1,582.1 L724.8,580.9 L723.7,579.7 L722.6,578.5 L721.7,577.3 L720.8,576.1 L719.9,574.8 L719.0,573.5 L718.3,572.1 L717.5,570.7 L716.8,569.3 L716.2,567.9 L715.7,566.5 L715.2,565.1 L714.7,563.6 L714.3,562.2 L713.9,560.7 L713.6,559.2 L713.4,557.7 L713.1,556.1 L713.0,554.6 L712.8,553.1 L712.7,551.6 L712.7,550.1 L712.7,548.5 L712.7,547.0 L712.8,545.4 L713.0,543.9 L713.2,542.3 L713.4,540.8 L713.7,539.3 L714.1,537.8 L714.5,536.2 L715.0,534.7 L715.5,533.2 L716.1,531.7 L716.7,530.1 L717.4,528.7 L718.1,527.2 L718.9,525.7 L719.7,524.3 L720.5,523.0 L721.4,521.7 L722.3,520.4 L723.3,519.2 L724.3,518.0 L725.3,516.8 L726.4,515.6 L727.5,514.4 L728.6,513.3 L729.8,512.3 L731.0,511.3 L732.2,510.3 L733.5,509.4 L734.7,508.5 L736.1,507.7 L737.4,506.9 L738.8,506.1 L740.2,505.4 L741.6,504.7 L743.0,504.1 L744.5,503.6 L745.9,503.0 L747.4,502.6 L748.9,502.2 L750.4,501.8 L751.9,501.5 L753.4,501.3 L754.9,501.1 L756.5,501.0 L758.0,500.9 L759.6,500.8 L761.2,500.8 L762.7,500.8 L764.2,500.9 L765.8,501.0 L767.4,501.2 L769.0,501.4 L770.7,501.6 L772.3,501.9 L773.9,502.3 L775.5,502.7 L777.1,503.1 L778.6,503.6 L780.2,504.1 L781.7,504.6 L783.2,505.1 L784.6,505.7 L786.0,506.3 L787.4,506.9 L788.9,507.6 L790.3,508.3 L791.6,509.0 L793.0,509.7 L794.3,510.5 L795.7,511.3 L797.0,512.2 L798.2,513.0 L799.5,513.9 L800.8,514.8 L802.0,515.8 L803.2,516.8 L804.4,517.8 L805.6,518.8 L806.7,519.9 L807.9,521.0 L809.0,522.1 L810.0,523.2 L811.1,524.3 L812.1,525.5 L813.1,526.7 L814.1,528.0 L815.0,529.3 L816.0,530.6 L816.9,532.0 L817.7,533.3 L818.6,534.7 L819.4,536.0 L820.1,537.4 L820.8,538.7 L821.5,540.0 L822.3,541.5 L822.9,543.0 L823.5,544.6 L824.1,546.1 L824.6,547.6 L825.1,549.0 L825.6,550.2 L826.1,551.4 L826.8,553.2 L827.5,554.7 L828.4,555.7 L829.9,556.0 L831.5,556.0Z"/><path d="M825.1,503.9 L825.2,503.5 L825.0,502.5 L824.6,501.1 L824.0,499.5 L823.3,497.6 L822.5,495.6 L821.6,493.7 L820.8,491.8 L820.1,490.1 L819.5,488.8 L818.9,487.4 L818.2,486.1 L817.6,484.8 L816.9,483.4 L816.2,482.1 L815.5,480.7 L814.8,479.4 L814.1,478.0 L813.3,476.5 L812.6,475.1 L811.9,473.8 L811.3,472.4 L810.6,471.0 L809.9,469.6 L809.2,468.1 L808.5,466.7 L807.8,465.2 L807.1,463.7 L806.4,462.3 L805.7,460.8 L804.9,459.3 L804.2,457.9 L803.4,456.4 L802.6,455.0 L801.8,453.6 L801.1,452.3 L800.3,450.9 L799.5,449.6 L798.7,448.2 L797.9,446.8 L797.1,445.5 L796.3,444.1 L795.4,442.8 L794.5,441.5 L793.7,440.1 L792.8,438.8 L791.9,437.5 L790.9,436.3 L790.0,435.0 L789.0,433.8 L788.0,432.5 L787.0,431.3 L786.0,430.1 L784.9,429.0 L783.9,427.8 L782.8,426.6 L781.7,425.5 L780.6,424.3 L779.5,423.2 L778.3,422.1 L777.2,420.9 L776.1,419.8 L774.9,418.6 L773.8,417.5 L772.7,416.4 L771.7,415.4 L770.6,414.3 L769.4,413.2 L768.3,412.1 L767.2,411.0 L766.0,409.9 L764.9,408.8 L763.7,407.7 L762.6,406.7 L761.5,405.6 L760.3,404.6 L759.2,403.6 L758.1,402.7 L757.1,401.7 L756.0,400.8 L755.0,400.0 L753.6,398.8 L752.2,397.6 L750.8,396.4 L749.4,395.3 L748.1,394.2 L746.8,393.3 L745.5,392.4 L744.2,391.8 L743.0,391.3 L741.0,390.9 L739.0,390.7 L737.2,390.9 L736.0,391.5 L735.3,392.6 L735.2,394.2 L735.5,396.0 L735.8,396.9 L736.3,397.9 L736.9,399.1 L737.6,400.3 L738.4,401.5 L739.3,402.9 L740.3,404.2 L741.3,405.6 L742.4,407.0 L743.5,408.4 L744.6,409.8 L745.7,411.2 L746.8,412.5 L747.8,413.8 L748.8,415.0 L749.8,416.2 L750.8,417.5 L751.9,418.7 L752.9,419.8 L753.9,421.0 L755.0,422.1 L756.0,423.2 L757.1,424.4 L758.2,425.5 L759.2,426.6 L760.3,427.7 L761.4,428.9 L762.5,430.0 L763.5,431.1 L764.6,432.2 L765.7,433.2 L766.8,434.3 L767.9,435.4 L769.0,436.5 L770.0,437.5 L771.1,438.6 L772.2,439.7 L773.3,440.8 L774.4,441.9 L775.5,442.9 L776.6,444.0 L777.6,445.1 L778.7,446.2 L779.8,447.4 L780.9,448.5 L781.9,449.6 L783.0,450.8 L784.1,451.9 L785.1,453.0 L786.2,454.2 L787.2,455.3 L788.3,456.5 L789.3,457.7 L790.3,458.9 L791.3,460.1 L792.2,461.3 L793.2,462.5 L794.1,463.7 L795.0,465.0 L795.9,466.3 L796.8,467.5 L797.7,468.8 L798.6,470.1 L799.4,471.4 L800.3,472.6 L801.2,473.9 L802.1,475.2 L802.9,476.4 L803.8,477.6 L804.8,478.9 L805.7,480.2 L806.7,481.5 L807.6,482.8 L808.5,484.1 L809.5,485.3 L810.4,486.6 L811.4,487.8 L812.3,489.1 L813.2,490.3 L814.2,491.4 L815.1,492.6 L816.2,493.9 L817.4,495.4 L818.6,496.9 L819.8,498.5 L821.1,500.0 L822.2,501.3 L823.2,502.4 L824.1,503.3 L824.7,503.8Z"/></g>
<path d="M831.5,503.0 L831.8,501.4 L832.0,499.9 L832.3,498.3 L832.5,496.8 L832.8,495.3 L833.0,493.7 L833.3,492.1 L833.5,490.5 L833.8,488.8 L834.0,487.0 L834.2,485.7 L834.3,484.3 L834.5,482.9 L834.7,481.5 L834.8,480.0 L835.0,478.5 L835.2,477.0 L835.3,475.4 L835.5,473.9 L835.6,472.3 L835.8,470.7 L836.0,469.2 L836.1,467.6 L836.3,466.1 L836.5,464.5 L836.6,463.0 L836.8,461.5 L837.0,460.0 L837.2,458.4 L837.4,456.8 L837.6,455.2 L837.8,453.6 L838.1,452.0 L838.3,450.4 L838.5,448.8 L838.7,447.2 L838.9,445.6 L839.2,444.0 L839.4,442.5 L839.6,440.9 L839.8,439.4 L840.1,437.9 L840.3,436.5 L840.5,435.0 L840.7,433.4 L841.0,431.8 L841.3,430.3 L841.5,428.8 L841.8,427.3 L842.1,425.8 L842.3,424.4 L842.6,422.9 L842.8,421.4 L843.0,419.9 L843.2,418.4 L843.4,416.8 L843.6,415.3 L843.7,413.7 L843.9,412.1 L844.0,410.5 L844.1,408.9 L844.2,407.2 L844.4,405.6 L844.5,404.0 L844.5,402.3 L844.6,400.7 L844.7,399.2 L844.7,397.6 L844.8,396.1 L844.8,394.7 L844.8,393.0 L844.8,391.3 L844.8,389.7 L844.8,388.1 L844.7,386.5 L844.7,385.0 L844.6,383.4 L844.5,381.8 L844.3,380.2 L844.1,378.7 L844.0,377.2 L843.8,375.7 L843.5,374.2 L843.3,372.7 L843.0,371.2 L842.8,369.6 L842.5,368.2 L842.2,366.7 L841.8,365.3 L841.5,363.9 L841.1,362.3 L840.7,360.8 L840.3,359.3 L839.8,357.8 L839.3,356.4 L838.8,355.0 L838.2,353.6 L837.6,352.3 L836.7,350.6 L835.7,348.7 L834.7,346.9 L833.6,345.3 L832.5,344.2 L831.5,343.8 L830.5,344.2 L829.4,345.3 L828.3,346.9 L827.3,348.7 L826.3,350.6 L825.4,352.3 L824.8,353.6 L824.2,355.0 L823.7,356.4 L823.2,357.8 L822.7,359.3 L822.3,360.8 L821.9,362.3 L821.5,363.9 L821.2,365.3 L820.8,366.7 L820.5,368.2 L820.2,369.6 L820.0,371.2 L819.7,372.7 L819.5,374.2 L819.2,375.7 L819.0,377.2 L818.9,378.7 L818.7,380.2 L818.5,381.8 L818.4,383.4 L818.3,385.0 L818.3,386.5 L818.2,388.1 L818.2,389.7 L818.2,391.3 L818.2,393.0 L818.2,394.7 L818.2,396.1 L818.3,397.6 L818.3,399.2 L818.4,400.7 L818.5,402.3 L818.5,404.0 L818.6,405.6 L818.8,407.2 L818.9,408.9 L819.0,410.5 L819.1,412.1 L819.3,413.7 L819.4,415.3 L819.6,416.8 L819.8,418.4 L820.0,419.9 L820.2,421.4 L820.4,422.9 L820.7,424.4 L820.9,425.8 L821.2,427.3 L821.5,428.8 L821.7,430.3 L822.0,431.8 L822.3,433.4 L822.5,435.0 L822.7,436.5 L822.9,437.9 L823.2,439.4 L823.4,440.9 L823.6,442.5 L823.8,444.0 L824.1,445.6 L824.3,447.2 L824.5,448.8 L824.7,450.4 L824.9,452.0 L825.2,453.6 L825.4,455.2 L825.6,456.8 L825.8,458.4 L826.0,460.0 L826.2,461.5 L826.4,463.0 L826.5,464.5 L826.7,466.1 L826.9,467.6 L827.0,469.2 L827.2,470.7 L827.4,472.3 L827.5,473.9 L827.7,475.4 L827.8,477.0 L828.0,478.5 L828.2,480.0 L828.3,481.5 L828.5,482.9 L828.7,484.3 L828.8,485.7 L829.0,487.0 L829.2,488.8 L829.5,490.5 L829.7,492.1 L830.0,493.7 L830.2,495.3 L830.5,496.8 L830.7,498.3 L831.0,499.9 L831.2,501.4 L831.5,503.0Z"/><path d="M824,532 L831.5,545 L839,532 L836.2,556 C836.2,566.5 826.8,566.5 826.8,556 Z"/>
<path d="M831.5,343V503" stroke="#0d7a4a" stroke-width="1.3"/>
<rect x="829" y="340" width="5" height="5" fill="#0d7a4a"/><rect x="829" y="501" width="5" height="5" fill="#0d7a4a"/>
</svg><!-- vertical scrollbar -->
<div class="a" style="left:1600px;top:85px;width:15px;height:938px;background:#393939;border-left:1px solid #333"></div>
<svg class="a" style="left:1601px;top:1009px" width="13" height="10"><path d="M2 2h9l-4.5 6z" fill="#e0e0e0"/></svg>
<div class="a" style="left:1615px;top:64px;width:2px;height:975px;background:#2c2c2c"></div>
<!-- status bar -->
<div class="a" style="left:73px;top:1022px;width:1544px;height:17px;background:#3b3b3b;border-top:1px solid #2a2a2a"></div>
<svg class="a" style="left:80px;top:1025px" width="20" height="12"><circle cx="5" cy="6" r="3.5" fill="#bbb"/><circle cx="5" cy="6" r="1.3" fill="#3b3b3b"/><path d="M11 4h6l-2-2M17 8h-6l2 2" stroke="#ccc" stroke-width="1.3" fill="none"/></svg>
<svg class="a" style="left:110px;top:1024px" width="16" height="13" fill="none" stroke="#ccc" stroke-width="1.2"><path d="M1 5v7h12v-3"/><path d="M4 9c1-4 4-5 8-5M10 2l3 2-3 2"/></svg>
<div class="a" style="left:136px;top:1025px;width:41px;height:14px;background:#9c9c9c"></div>
<div class="t" style="left:138px;top:1028px;font-size:11px;color:#1a1a1a">800%</div>
<div class="a" style="left:177px;top:1025px;width:15px;height:14px;background:#4a4a4a;border:1px solid #2e2e2e"></div>
<svg class="a" style="left:180px;top:1029px" width="9" height="6"><path d="M0.5 0.5h8l-4 5z" fill="#ddd"/></svg>
<svg class="a" style="left:200px;top:1026px" width="130" height="11" fill="#5e5e5e"><path d="M3 1v9M12 1v9L5 5.5z"/><path d="M27 1v9L20 5.5z"/><path d="M105 1v9l6-4.5z"/><path d="M120 1v9l6-4.5zM128 1v9"/></svg>
<div class="a" style="left:236px;top:1025px;width:43px;height:14px;background:#9c9c9c"></div>
<div class="t" style="left:239px;top:1028px;font-size:11px;color:#1a1a1a">1</div>
<div class="a" style="left:278px;top:1025px;width:15px;height:14px;background:#4a4a4a;border:1px solid #2e2e2e"></div>
<svg class="a" style="left:281px;top:1029px" width="9" height="6"><path d="M0.5 0.5h8l-4 5z" fill="#ddd"/></svg>
<div class="a" style="left:335px;top:1023px;width:1px;height:16px;background:#2f2f2f"></div>
<div class="t" style="left:402px;top:1027px;font-size:11px;color:#d8d8d8">Liniensegment</div>
<svg class="a" style="left:540px;top:1026px" width="8" height="10"><path d="M1 1v8l5-4z" fill="#d8d8d8"/></svg>
<div class="a" style="left:551px;top:1023px;width:1049px;height:16px;background:#353535"></div>
<svg class="a" style="left:557px;top:1026px" width="8" height="10"><path d="M6 1v8L1 5z" fill="#e0e0e0"/></svg>
<div class="a" style="left:1069px;top:1024px;width:15px;height:15px;background:#969696"></div>
<svg class="a" style="left:1585px;top:1026px" width="8" height="10"><path d="M1 1v8l5-4z" fill="#e0e0e0"/></svg>
<div class="a" style="left:1600px;top:1023px;width:15px;height:16px;background:#474747"></div>
<!-- EBENEN PANEL -->
<div class="a" style="left:1385px;top:75px;width:231px;height:623px;background:#4b4b4b;border:1px solid #262626"></div>
<div class="a" style="left:1386px;top:76px;width:229px;height:20px;background:#363636"></div>
<div class="a" style="left:1386px;top:76px;width:47px;height:20px;background:#4b4b4b"></div>
<div class="t" style="left:1393px;top:82px;font-size:11px;color:#e8e8e8">Ebenen</div>
<svg class="a" style="left:1575px;top:82px" width="40" height="11"><path d="M1 1v8l4-4zM6 1v8l4-4z" fill="#cfcfcf"/><path d="M16.5 0v11M18.5 0v11" stroke="#555"/><path d="M22 4h5l-2.5 3z" fill="#cfcfcf"/><path d="M28 1.5h9M28 4.5h9M28 7.5h9M28 10h9" stroke="#cfcfcf"/></svg>
<div class="a" style="left:1391px;top:100px;width:220px;height:570px;background:#4b4b4b;border:1px solid #2c2c2c"></div>
<!-- rows -->
<div class="a" style="left:1392px;top:101px;width:218px;height:21px;background:#5b6170;border-bottom:1px solid #3a3a3a"></div>
<div class="a" style="left:1392px;top:122px;width:218px;height:21px;background:#535353;border-bottom:1px solid #3a3a3a"></div>
<div class="a" style="left:1392px;top:143px;width:218px;height:21px;background:#535353;border-bottom:1px solid #3a3a3a"></div>
<div class="a" style="left:1392px;top:164px;width:218px;height:21px;background:#535353;border-bottom:1px solid #3a3a3a"></div>
<div class="a" style="left:1392px;top:185px;width:218px;height:21px;background:#535353;border-bottom:1px solid #3a3a3a"></div>
<div class="a" style="left:1392px;top:206px;width:218px;height:21px;background:#474747;border-bottom:1px solid #3a3a3a"></div>
<div class="a" style="left:1392px;top:227px;width:218px;height:21px;background:#474747;border-bottom:1px solid #3a3a3a"></div>
<div class="a" style="left:1412px;top:101px;width:1px;height:147px;background:#3a3a3a"></div>
<div class="a" style="left:1432px;top:101px;width:1px;height:147px;background:#3a3a3a"></div>
<div class="a" style="left:1439px;top:101px;width:1px;height:147px;background:#3a3a3a"></div>
<div class="a" style="left:1575px;top:101px;width:1px;height:147px;background:#3a3a3a"></div>
<div class="a" style="left:1434px;top:102px;width:4px;height:104px;background:#1f8a4c"></div>
<div class="a" style="left:1434px;top:207px;width:4px;height:41px;background:#e06a1c"></div>
<svg class="a" style="left:1392px;top:101px" width="220" height="147">
 <g fill="#c0c0c0"><path d="M3 10.5c3-5 11-5 14 0c-3 5-11 5-14 0z"/><path d="M3 31.5c3-5 11-5 14 0c-3 5-11 5-14 0z"/><path d="M3 52.5c3-5 11-5 14 0c-3 5-11 5-14 0z"/><path d="M3 73.5c3-5 11-5 14 0c-3 5-11 5-14 0z"/><path d="M3 94.5c3-5 11-5 14 0c-3 5-11 5-14 0z"/></g>
 <g fill="#3a3a3a"><circle cx="10" cy="10.5" r="2.2"/><circle cx="10" cy="31.5" r="2.2"/><circle cx="10" cy="52.5" r="2.2"/><circle cx="10" cy="73.5" r="2.2"/><circle cx="10" cy="94.5" r="2.2"/></g>
 <g fill="#c0c0c0"><rect x="27" y="115" width="9" height="7"/><path d="M29 115v-3a2.5 2.5 0 0 1 5 0v3" fill="none" stroke="#c0c0c0" stroke-width="1.5"/><rect x="27" y="136" width="9" height="7"/><path d="M29 136v-3a2.5 2.5 0 0 1 5 0v3" fill="none" stroke="#c0c0c0" stroke-width="1.5"/></g>
 <path d="M51 8h9l-4.5 6z" fill="#d8d8d8"/><path d="M53 111v9l6-4.5z" fill="#d8d8d8"/><path d="M53 132v9l6-4.5z" fill="#d8d8d8"/>
 <g fill="#fff" stroke="#111"><rect x="69.5" y="2.5" width="17" height="16"/><rect x="89.5" y="23.5" width="17" height="16"/><rect x="89.5" y="44.5" width="17" height="16"/><rect x="89.5" y="65.5" width="17" height="16"/><rect x="89.5" y="86.5" width="17" height="16"/><rect x="69.5" y="107.5" width="17" height="16"/><rect x="69.5" y="128.5" width="17" height="16"/></g>
 <path d="M72 11c3-2 5 0 7-1s4-1 6 0" stroke="#999" fill="none"/>
 <path d="M98 25l1 12l-2 0z" fill="#888"/><path d="M93 47l10 10" stroke="#888" stroke-width="1.5"/><path d="M103 67l-10 12" stroke="#888" stroke-width="1.5"/><path d="M92 95c3-2 5 0 7-1s4-1 6 0" stroke="#999" fill="none"/>
 <path d="M72 110h12M73 111v12M83 111v12M72 131h12M73 132v12M83 132v12" stroke="#a08060" stroke-width="1.2"/>
 <g fill="none" stroke="#bdbdbd" stroke-width="1.2"><circle cx="193" cy="11" r="4.5"/><circle cx="193" cy="95" r="4.5"/><circle cx="193" cy="116" r="4.5"/><circle cx="193" cy="137" r="4.5"/><circle cx="193" cy="32" r="5.5"/></g>
 <g fill="#a8a8a8"><circle cx="193" cy="32" r="3.5"/><circle cx="193" cy="53" r="4.5"/><circle cx="193" cy="74" r="4.5"/></g>
 <rect x="205.5" y="8.5" width="5" height="5" fill="#1f8a4c" stroke="#111"/><rect x="205" y="28" width="7" height="7" fill="#1f8a4c" stroke="#111"/>
 <path d="M212 1h5v5z" fill="#e0e0e0"/>
</svg>
<div class="t" style="left:1484px;top:106px;font-size:10.5px;color:#e8e8e8">Vorderseite</div>
<div class="t" style="left:1504px;top:127px;font-size:10.5px;color:#e0e0e0">&lt;Pfad&gt;</div>
<div class="t" style="left:1504px;top:148px;font-size:10.5px;color:#e0e0e0">&lt;Pfad&gt;</div>
<div class="t" style="left:1504px;top:169px;font-size:10.5px;color:#e0e0e0">&lt;Pfad&gt;</div>
<div class="t" style="left:1504px;top:190px;font-size:10.5px;color:#e0e0e0">&lt;Pfad&gt;</div>
<div class="t" style="left:1484px;top:211px;font-size:10.5px;color:#e0e0e0">Vorlage Vo...</div>
<div class="t" style="left:1484px;top:232px;font-size:10.5px;color:#e0e0e0">Vorlage Rü...</div>
<div class="t" style="left:1391px;top:674px;font-size:11px;color:#e8e8e8">3 Ebenen</div>
<svg class="a" style="left:1470px;top:672px" width="148" height="16" fill="none" stroke="#d0d0d0" stroke-width="1.2">
 <circle cx="10" cy="5" r="4"/><path d="M7 8l-5 6"/>
 <rect x="29.5" y="1.5" width="7" height="7" fill="#aaa"/><rect x="32.5" y="4.5" width="7" height="8" stroke="#888"/>
 <path d="M55 2v4h5M57 4l3 3" /><rect x="61" y="3" width="7" height="7" fill="#ccc" stroke="none"/>
 <path d="M83 3h9v10h-6l-3-3z" fill="#ccc" stroke="none"/>
 <path d="M107 3h10M110 3v-1h4v1M108 5v8h8v-8M110.5 6v6M113.5 6v6"/>
 <g fill="#888" stroke="none"><rect x="142" y="8" width="1.5" height="1.5"/><rect x="139" y="11" width="1.5" height="1.5"/><rect x="142" y="11" width="1.5" height="1.5"/><rect x="136" y="14" width="1.5" height="1.5"/><rect x="139" y="14" width="1.5" height="1.5"/><rect x="142" y="14" width="1.5" height="1.5"/></g>
</svg>
<div class="a" style="left:1386px;top:689px;width:229px;height:1px;background:#333"></div>
<div class="a" style="left:1386px;top:690px;width:229px;height:7px;background:#454545"></div>
<div class="a" style="left:1491px;top:691px;width:19px;height:4px;background:repeating-linear-gradient(90deg,#111 0 1px,transparent 1px 2px)"></div>

<!-- DOCK ICON COLUMN -->
<div class="a" style="left:1617px;top:64px;width:303px;height:11px;background:#363636"></div>
<svg class="a" style="left:1643px;top:66px" width="10" height="8"><path d="M4 0v8L0 4zM9 0v8L5 4z" fill="#c0c0c0"/></svg>
<svg class="a" style="left:1906px;top:66px" width="10" height="8"><path d="M0 0v8l4-4zM5 0v8l4-4z" fill="#c0c0c0"/></svg>
<div class="a" style="left:1617px;top:75px;width:39px;height:964px;background:#474747"></div>
<div class="a" style="left:1618px;top:76px;width:36px;height:41px;background:#4b4b4b;border-bottom:1px solid #333"></div>
<div class="a" style="left:1627px;top:80px;width:19px;height:4px;background:repeating-linear-gradient(90deg,#111 0 1px,transparent 1px 2px)"></div>
<div class="a" style="left:1622px;top:88px;width:29px;height:25px;background:#333;border-radius:3px"></div>
<svg class="a" style="left:1626px;top:90px" width="22" height="21"><path d="M11 6l9 5-9 5-9-5z" fill="#bbb"/><path d="M11 1l9 5-9 5-9-5z" fill="#e8e8e8"/></svg>
<div class="a" style="left:1655px;top:75px;width:2px;height:964px;background:#2c2c2c"></div>
<div class="a" style="left:1657px;top:75px;width:263px;height:964px;background:#2a2a2a"></div>
<div class="a" style="left:1918px;top:75px;width:2px;height:964px;background:#303030"></div>
<div class="a" style="left:1657px;top:76px;width:261px;height:171px;background:#4b4b4b"></div>
<div class="a" style="left:1657px;top:76px;width:261px;height:18px;background:#393939"></div>
<div class="a" style="left:1658px;top:77px;width:61px;height:17px;background:#4b4b4b"></div>
<svg class="a" style="left:1663px;top:80px" width="7" height="11"><path d="M1 4.5l2.5-3 2.5 3M1 6.5l2.5 3 2.5-3" fill="none" stroke="#cfcfcf" stroke-width="1.2"/></svg>
<div class="t" style="left:1671px;top:80px;font-size:10.5px;font-weight:bold;color:#ececec">Farbhilfe</div>
<svg class="a" style="left:1899px;top:80px" width="17" height="11"><path d="M0 3h5l-2.5 3z" fill="#cfcfcf"/><path d="M6 1.5h10M6 4.5h10M6 7.5h10M6 10h10" stroke="#cfcfcf"/></svg>
<div class="a" style="left:1664px;top:103px;width:20px;height:20px;background:#fff"></div>
<div class="a" style="left:1666px;top:105px;width:16px;height:16px;background:#8c8c8c;border:1px solid #111"></div>
<div class="a" style="left:1691px;top:102px;width:207px;height:22px;background:#e2e2e2;border:1px solid #333"></div>
<div class="a" style="left:1693px;top:104px;width:17px;height:18px;background:#fff"></div>
<div class="a" style="left:1694px;top:105px;width:15px;height:16px;background:#8a8a8a;border:1px solid #111"></div>
<div class="a" style="left:1710px;top:104px;width:32px;height:18px;background:#3d3c42"></div>
<div class="a" style="left:1742px;top:104px;width:16px;height:18px;background:#8c7e70"></div>
<div class="a" style="left:1758px;top:104px;width:17px;height:18px;background:#c6d39d"></div>
<div class="a" style="left:1775px;top:104px;width:1px;height:18px;background:#222"></div>
<div class="a" style="left:1897px;top:102px;width:16px;height:22px;background:#5a5a5a;border:1px solid #333"></div>
<svg class="a" style="left:1900px;top:110px" width="10" height="7"><path d="M1 1h8l-4 5z" fill="#ddd"/></svg>
<div class="t" style="left:1681px;top:133px;font-size:11px;font-weight:bold;color:#d8d8d8">Schattierungen</div>
<svg class="a" style="left:1784px;top:136px" width="8" height="5"><path d="M0 0h8l-4 4z" fill="#ddd"/></svg>
<div class="t" style="left:1847px;top:133px;font-size:11px;font-weight:bold;color:#d8d8d8">Farbtöne</div>
<div class="a" style="left:1663px;top:150px;width:251px;height:77px;background:#111"></div>
<div class="a" style="left:1664px;top:151px;width:27px;height:14px;background:#000000"></div>
<div class="a" style="left:1692px;top:151px;width:26px;height:14px;background:#1c1c1c"></div>
<div class="a" style="left:1719px;top:151px;width:27px;height:14px;background:#3a3a3a"></div>
<div class="a" style="left:1747px;top:151px;width:27px;height:14px;background:#626262"></div>
<div class="a" style="left:1775px;top:151px;width:26px;height:14px;background:#8a8a8a"></div>
<div class="a" style="left:1802px;top:151px;width:27px;height:14px;background:#a6a6a6"></div>
<div class="a" style="left:1830px;top:151px;width:27px;height:14px;background:#bdbdbd"></div>
<div class="a" style="left:1858px;top:151px;width:26px;height:14px;background:#d3d3d3"></div>
<div class="a" style="left:1885px;top:151px;width:27px;height:14px;background:#e9e9e9"></div>
<div class="a" style="left:1664px;top:166px;width:27px;height:14px;background:#141416"></div>
<div class="a" style="left:1692px;top:166px;width:26px;height:14px;background:#3a3a3c"></div>
<div class="a" style="left:1719px;top:166px;width:27px;height:14px;background:#404042"></div>
<div class="a" style="left:1747px;top:166px;width:27px;height:14px;background:#3e3f44"></div>
<div class="a" style="left:1775px;top:166px;width:26px;height:14px;background:#363a3e"></div>
<div class="a" style="left:1802px;top:166px;width:27px;height:14px;background:#505358"></div>
<div class="a" style="left:1830px;top:166px;width:27px;height:14px;background:#7a787a"></div>
<div class="a" style="left:1858px;top:166px;width:26px;height:14px;background:#a09e9e"></div>
<div class="a" style="left:1885px;top:166px;width:27px;height:14px;background:#d0d0d0"></div>
<div class="a" style="left:1664px;top:181px;width:27px;height:14px;background:#151518"></div>
<div class="a" style="left:1692px;top:181px;width:26px;height:14px;background:#3b393b"></div>
<div class="a" style="left:1719px;top:181px;width:27px;height:14px;background:#464245"></div>
<div class="a" style="left:1747px;top:181px;width:27px;height:14px;background:#4f444a"></div>
<div class="a" style="left:1775px;top:181px;width:26px;height:14px;background:#4a3f42"></div>
<div class="a" style="left:1802px;top:181px;width:27px;height:14px;background:#6f6064"></div>
<div class="a" style="left:1830px;top:181px;width:27px;height:14px;background:#8e8083"></div>
<div class="a" style="left:1858px;top:181px;width:26px;height:14px;background:#ab9f9d"></div>
<div class="a" style="left:1885px;top:181px;width:27px;height:14px;background:#d3d0d0"></div>
<div class="a" style="left:1664px;top:196px;width:27px;height:14px;background:#16171a"></div>
<div class="a" style="left:1692px;top:196px;width:26px;height:14px;background:#555353"></div>
<div class="a" style="left:1719px;top:196px;width:27px;height:14px;background:#7b7971"></div>
<div class="a" style="left:1747px;top:196px;width:27px;height:14px;background:#8f8171"></div>
<div class="a" style="left:1775px;top:196px;width:26px;height:14px;background:#998771"></div>
<div class="a" style="left:1802px;top:196px;width:27px;height:14px;background:#b19f8b"></div>
<div class="a" style="left:1830px;top:196px;width:27px;height:14px;background:#c9b9a9"></div>
<div class="a" style="left:1858px;top:196px;width:26px;height:14px;background:#ddd5cd"></div>
<div class="a" style="left:1885px;top:196px;width:27px;height:14px;background:#f0efeb"></div>
<div class="a" style="left:1664px;top:211px;width:27px;height:14px;background:#16171a"></div>
<div class="a" style="left:1692px;top:211px;width:26px;height:14px;background:#5f615f"></div>
<div class="a" style="left:1719px;top:211px;width:27px;height:14px;background:#919589"></div>
<div class="a" style="left:1747px;top:211px;width:27px;height:14px;background:#abb69b"></div>
<div class="a" style="left:1775px;top:211px;width:26px;height:14px;background:#c4d49d"></div>
<div class="a" style="left:1802px;top:211px;width:27px;height:14px;background:#d4e0b7"></div>
<div class="a" style="left:1830px;top:211px;width:27px;height:14px;background:#e2ebd1"></div>
<div class="a" style="left:1858px;top:211px;width:26px;height:14px;background:#eff3e5"></div>
<div class="a" style="left:1885px;top:211px;width:27px;height:14px;background:#f7f7f1"></div>
<svg class="a" style="left:1669px;top:231px" width="20" height="14"><rect x="1" y="1" width="13" height="9" fill="#aaa"/><path d="M5 1v9M9 1v9M1 5.5h13" stroke="#666"/><path d="M14 11h5l-2.5 3z" fill="#ccc"/></svg>
<div class="t" style="left:1695px;top:231px;font-size:11px;color:#e0e0e0">Ohne</div>
<svg class="a" style="left:1852px;top:231px" width="14" height="14"><circle cx="7" cy="7" r="6" fill="#888" stroke="#ccc"/><circle cx="7" cy="7" r="2.5" fill="#555"/></svg>
<svg class="a" style="left:1877px;top:231px" width="18" height="14"><rect x="6" y="1" width="11" height="11" fill="#aaa"/><path d="M8 1v11M12 1v11" stroke="#666"/><path d="M1 9h7M4.5 5.5v7" stroke="#eee" stroke-width="2"/></svg>
<svg class="a" style="left:1905px;top:235px" width="10" height="10" fill="#7a7a7a"><rect x="7" y="1" width="1.5" height="1.5"/><rect x="4" y="4" width="1.5" height="1.5"/><rect x="7" y="4" width="1.5" height="1.5"/><rect x="1" y="7" width="1.5" height="1.5"/><rect x="4" y="7" width="1.5" height="1.5"/><rect x="7" y="7" width="1.5" height="1.5"/></svg>
<div class="a" style="left:1657px;top:250px;width:261px;height:234px;background:#4b4b4b"></div>
<div class="a" style="left:1657px;top:250px;width:261px;height:18px;background:#393939"></div>
<div class="a" style="left:1658px;top:251px;width:55px;height:17px;background:#4b4b4b"></div>
<svg class="a" style="left:1663px;top:254px" width="7" height="11"><path d="M1 4.5l2.5-3 2.5 3M1 6.5l2.5 3 2.5-3" fill="none" stroke="#cfcfcf" stroke-width="1.2"/></svg>
<div class="t" style="left:1671px;top:254px;font-size:10.5px;font-weight:bold;color:#ececec">Verlauf</div>
<svg class="a" style="left:1899px;top:254px" width="17" height="11"><path d="M0 3h5l-2.5 3z" fill="#cfcfcf"/><path d="M6 1.5h10M6 4.5h10M6 7.5h10M6 10h10" stroke="#cfcfcf"/></svg>
<div class="a" style="left:1664px;top:274px;width:29px;height:29px;background:linear-gradient(90deg,#fff,#000);border:1px solid #333"></div>
<svg class="a" style="left:1696px;top:286px" width="8" height="5"><path d="M0 0h8l-4 4z" fill="#ddd"/></svg>
<div class="a" style="left:1674px;top:321px;width:18px;height:18px;background:#8a8a8a;border:1px solid #ddd"></div>
<div class="a" style="left:1678px;top:325px;width:10px;height:10px;background:#4b4b4b;border:1.5px solid #eee"></div>
<div class="a" style="left:1664px;top:311px;width:19px;height:19px;background:#fff;border:1px solid #555;overflow:hidden"><div class="a" style="left:-4px;top:8px;width:26px;height:2px;background:#d01020;transform:rotate(-45deg)"></div></div>
<svg class="a" style="left:1669px;top:350px" width="20" height="16" fill="none" stroke="#6a6a6a"><rect x="1.5" y="1.5" width="8" height="6"/><rect x="8.5" y="8.5" width="9" height="6"/><path d="M12 3h4l-2 2M4 13h4"/></svg>
<div class="t" style="left:1730px;top:279px;font-size:11px;font-weight:bold;color:#dcdcdc">Art:</div>
<div class="a" style="left:1753px;top:275px;width:160px;height:18px;background:#595959;border:1px solid #333"></div>
<div class="a" style="left:1893px;top:276px;width:1px;height:16px;background:#444"></div>
<svg class="a" style="left:1898px;top:281px" width="10" height="7"><path d="M1 1h8l-4 5z" fill="#ddd"/></svg>
<div class="t" style="left:1712px;top:305px;font-size:11px;color:#7a7a7a">Kontur:</div>
<div class="a" style="left:1753px;top:301px;width:23px;height:18px;background:#555;border:1px solid #3a3a3a"></div>
<svg class="a" style="left:1757px;top:304px" width="15" height="12" fill="none" stroke="#777" stroke-width="2"><path d="M2 12V3h12M6 12V7h8"/></svg>
<div class="a" style="left:1776px;top:301px;width:23px;height:18px;background:#555;border:1px solid #3a3a3a"></div>
<svg class="a" style="left:1780px;top:304px" width="15" height="12" fill="none" stroke="#777" stroke-width="2"><path d="M2 12V3h12M6 12V7h8"/></svg>
<div class="a" style="left:1799px;top:301px;width:23px;height:18px;background:#555;border:1px solid #3a3a3a"></div>
<svg class="a" style="left:1803px;top:304px" width="15" height="12" fill="none" stroke="#777" stroke-width="2"><path d="M2 12V3h12M6 12V7h8"/></svg>
<div class="a" style="left:1753px;top:328px;width:67px;height:18px;background:#5e5e5e;border:1px solid #3a3a3a"></div>
<div class="a" style="left:1804px;top:329px;width:1px;height:16px;background:#454545"></div>
<svg class="a" style="left:1808px;top:334px" width="9" height="6"><path d="M0 0h8l-4 5z" fill="#8a8a8a"/></svg>
<div class="a" style="left:1753px;top:353px;width:67px;height:18px;background:#5e5e5e;border:1px solid #3a3a3a"></div>
<div class="a" style="left:1804px;top:354px;width:1px;height:16px;background:#454545"></div>
<svg class="a" style="left:1808px;top:359px" width="9" height="6"><path d="M0 0h8l-4 5z" fill="#8a8a8a"/></svg>
<svg class="a" style="left:1733px;top:330px" width="15" height="12" fill="none" stroke="#6e6e6e"><path d="M1 11h13M1 11l9-9"/></svg>
<svg class="a" style="left:1733px;top:354px" width="15" height="16" fill="none" stroke="#6e6e6e"><ellipse cx="9" cy="8" rx="5" ry="4"/><path d="M2 1v14M1 1h3M1 15h3"/></svg>
<div class="a" style="left:1668px;top:386px;width:216px;height:19px;background:linear-gradient(90deg,#fdfdfd 0%,#c8ccce 35%,#8e9294 65%,#000 100%);border:1px solid #333"></div>
<svg class="a" style="left:1896px;top:389px" width="13" height="15" fill="none" stroke="#6a6a6a" stroke-width="1.2"><path d="M1 3h11M4 3V1h5v2M2 5v9h9V5M5 6v7M8 6v7"/></svg>
<div class="t" style="left:1702px;top:437px;font-size:11px;color:#7a7a7a">Deckkraft:</div>
<div class="a" style="left:1753px;top:433px;width:67px;height:18px;background:#5e5e5e;border:1px solid #3a3a3a"></div>
<div class="a" style="left:1804px;top:434px;width:1px;height:16px;background:#454545"></div>
<svg class="a" style="left:1808px;top:439px" width="9" height="6"><path d="M0 0h8l-4 5z" fill="#8a8a8a"/></svg>
<div class="t" style="left:1709px;top:463px;font-size:11px;color:#7a7a7a">Position:</div>
<div class="a" style="left:1753px;top:459px;width:67px;height:18px;background:#5e5e5e;border:1px solid #3a3a3a"></div>
<div class="a" style="left:1804px;top:460px;width:1px;height:16px;background:#454545"></div>
<svg class="a" style="left:1808px;top:465px" width="9" height="6"><path d="M0 0h8l-4 5z" fill="#8a8a8a"/></svg>
<svg class="a" style="left:1905px;top:472px" width="10" height="10" fill="#7a7a7a"><rect x="7" y="1" width="1.5" height="1.5"/><rect x="4" y="4" width="1.5" height="1.5"/><rect x="7" y="4" width="1.5" height="1.5"/><rect x="1" y="7" width="1.5" height="1.5"/><rect x="4" y="7" width="1.5" height="1.5"/><rect x="7" y="7" width="1.5" height="1.5"/></svg>
<div class="a" style="left:1657px;top:487px;width:261px;height:169px;background:#4b4b4b"></div>
<div class="a" style="left:1657px;top:487px;width:261px;height:18px;background:#393939"></div>
<div class="a" style="left:1658px;top:488px;width:62px;height:17px;background:#4b4b4b"></div>
<div class="t" style="left:1665px;top:491px;font-size:10.5px;font-weight:bold;color:#ececec">Farbfelder</div>
<svg class="a" style="left:1899px;top:491px" width="17" height="11"><path d="M0 3h5l-2.5 3z" fill="#cfcfcf"/><path d="M6 1.5h10M6 4.5h10M6 7.5h10M6 10h10" stroke="#cfcfcf"/></svg>
<div class="a" style="left:1674px;top:520px;width:18px;height:18px;background:#8a8a8a;border:1px solid #ddd"></div>
<div class="a" style="left:1678px;top:524px;width:10px;height:10px;background:#4b4b4b;border:1.5px solid #eee"></div>
<div class="a" style="left:1664px;top:510px;width:19px;height:19px;background:#fff;border:1px solid #555;overflow:hidden"><div class="a" style="left:-4px;top:8px;width:26px;height:2px;background:#d01020;transform:rotate(-45deg)"></div></div>
<div class="a" style="left:1862px;top:510px;width:51px;height:23px;background:#3a3a3a;border-radius:2px"></div>
<div class="a" style="left:1863px;top:511px;width:24px;height:21px;background:#5a5a5a"></div>
<svg class="a" style="left:1866px;top:514px" width="44" height="15" fill="#e0e0e0"><rect x="2" y="1" width="14" height="2"/><rect x="2" y="5" width="14" height="2"/><rect x="2" y="9" width="14" height="2"/><rect x="2" y="13" width="14" height="2"/><rect x="27" y="1" width="4" height="3.5"/><rect x="32" y="1" width="4" height="3.5"/><rect x="37" y="1" width="4" height="3.5"/><rect x="27" y="6" width="4" height="3.5"/><rect x="32" y="6" width="4" height="3.5"/><rect x="37" y="6" width="4" height="3.5"/><rect x="27" y="11" width="4" height="3.5"/><rect x="32" y="11" width="4" height="3.5"/><rect x="37" y="11" width="4" height="3.5"/></svg>
<div class="a" style="left:1663px;top:544px;width:251px;height:93px;background:#4b4b4b;border:1px solid #333"></div>
<div class="a" style="left:1901px;top:545px;width:12px;height:91px;background:#454545"></div>
<svg class="a" style="left:1902px;top:548px" width="10" height="84"><path d="M1 7h8l-4-5z" fill="#666"/><path d="M1 76h8l-4 5z" fill="#666"/></svg>
<div class="a" style="left:1664px;top:545px;width:13px;height:13px;background:#fff;border:1px solid #111;overflow:hidden"><div class="a" style="left:-3px;top:5px;width:18px;height:2px;background:#d01020;transform:rotate(-45deg)"></div></div>
<svg class="a" style="left:1678px;top:545px" width="13" height="13"><rect width="13" height="13" fill="#fff"/><circle cx="6.5" cy="6.5" r="4" fill="none" stroke="#222"/><circle cx="6.5" cy="6.5" r="1.5" fill="#222"/><path d="M6.5 0v13M0 6.5h13" stroke="#222" stroke-width="0.8"/></svg>
<div class="a" style="left:1692px;top:545px;width:13px;height:13px;background:#ffffff"></div>
<div class="a" style="left:1706px;top:545px;width:13px;height:13px;background:#000000"></div>
<div class="a" style="left:1720px;top:545px;width:13px;height:13px;background:#e30613"></div>
<div class="a" style="left:1734px;top:545px;width:13px;height:13px;background:#ffed00"></div>
<div class="a" style="left:1748px;top:545px;width:13px;height:13px;background:#009a3e"></div>
<div class="a" style="left:1762px;top:545px;width:13px;height:13px;background:#0ea5e0"></div>
<div class="a" style="left:1776px;top:545px;width:13px;height:13px;background:#2c2a84"></div>
<div class="a" style="left:1790px;top:545px;width:13px;height:13px;background:#e5007d"></div>
<div class="a" style="left:1804px;top:545px;width:13px;height:13px;background:#c5143a"></div>
<div class="a" style="left:1818px;top:545px;width:13px;height:13px;background:#e2402e"></div>
<div class="a" style="left:1832px;top:545px;width:13px;height:13px;background:#ea6a26"></div>
<div class="a" style="left:1846px;top:545px;width:13px;height:13px;background:#f29a12"></div>
<div class="a" style="left:1860px;top:545px;width:13px;height:13px;background:#f6b23a"></div>
<div class="a" style="left:1874px;top:545px;width:13px;height:13px;background:#fff000"></div>
<div class="a" style="left:1664px;top:559px;width:13px;height:13px;background:#e6dc00"></div>
<div class="a" style="left:1678px;top:559px;width:13px;height:13px;background:#b3cf1a"></div>
<div class="a" style="left:1692px;top:559px;width:13px;height:13px;background:#5cb030"></div>
<div class="a" style="left:1706px;top:559px;width:13px;height:13px;background:#2f9b3a"></div>
<div class="a" style="left:1720px;top:559px;width:13px;height:13px;background:#1d7a35"></div>
<div class="a" style="left:1734px;top:559px;width:13px;height:13px;background:#55b36a"></div>
<div class="a" style="left:1748px;top:559px;width:13px;height:13px;background:#27a59b"></div>
<div class="a" style="left:1762px;top:559px;width:13px;height:13px;background:#56aee6"></div>
<div class="a" style="left:1776px;top:559px;width:13px;height:13px;background:#2f7bc4"></div>
<div class="a" style="left:1790px;top:559px;width:13px;height:13px;background:#233d94"></div>
<div class="a" style="left:1804px;top:559px;width:13px;height:13px;background:#1f2a6c"></div>
<div class="a" style="left:1818px;top:559px;width:13px;height:13px;background:#6b2b90"></div>
<div class="a" style="left:1832px;top:559px;width:13px;height:13px;background:#8e1b8c"></div>
<div class="a" style="left:1846px;top:559px;width:13px;height:13px;background:#b0166c"></div>
<div class="a" style="left:1860px;top:559px;width:13px;height:13px;background:#e0106a"></div>
<div class="a" style="left:1874px;top:559px;width:13px;height:13px;background:#e3177e"></div>
<div class="a" style="left:1664px;top:573px;width:13px;height:13px;background:#d0bfa8"></div>
<div class="a" style="left:1678px;top:573px;width:13px;height:13px;background:#a89888"></div>
<div class="a" style="left:1692px;top:573px;width:13px;height:13px;background:#7f6f60"></div>
<div class="a" style="left:1706px;top:573px;width:13px;height:13px;background:#5e4d40"></div>
<div class="a" style="left:1720px;top:573px;width:13px;height:13px;background:#d6a56a"></div>
<div class="a" style="left:1734px;top:573px;width:13px;height:13px;background:#c78c4a"></div>
<div class="a" style="left:1748px;top:573px;width:13px;height:13px;background:#aa6f38"></div>
<div class="a" style="left:1762px;top:573px;width:13px;height:13px;background:#8e5224"></div>
<div class="a" style="left:1776px;top:573px;width:13px;height:13px;background:#6e3f1c"></div>
<div class="a" style="left:1790px;top:573px;width:13px;height:13px;background:#462a1c"></div>
<div class="a" style="left:1804px;top:573px;width:13px;height:13px;background:linear-gradient(90deg,#fff,#000)"></div>
<div class="a" style="left:1818px;top:573px;width:13px;height:13px;background:#000000"></div>
<div class="a" style="left:1832px;top:573px;width:13px;height:13px;background:radial-gradient(circle,#eee,#555 70%,#000)"></div>
<div class="a" style="left:1846px;top:573px;width:13px;height:13px;background:#000000"></div>
<div class="a" style="left:1860px;top:573px;width:13px;height:13px;background:linear-gradient(90deg,#c98a50,#fbe3c0,#a0603a)"></div>
<div class="a" style="left:1874px;top:573px;width:13px;height:13px;background:radial-gradient(circle,#fde0a0,#b05020 60%,#5a2010)"></div>
<div class="a" style="left:1664px;top:587px;width:13px;height:13px;background:#d03a28"></div>
<div class="a" style="left:1678px;top:587px;width:13px;height:13px;background:#ec8a00"></div>
<svg class="a" style="left:1682px;top:593px" width="9" height="7"><path d="M0 7L9 0v7z" fill="#fff"/><path d="M9 0v7H0z" fill="#fff" stroke="#000" stroke-width="1"/><circle cx="6" cy="5" r="1" fill="#000"/></svg>
<div class="a" style="left:1692px;top:587px;width:13px;height:13px;background:#bcbcbc"></div>
<svg class="a" style="left:1696px;top:593px" width="9" height="7"><path d="M0 7L9 0v7z" fill="#fff"/><path d="M9 0v7H0z" fill="#fff" stroke="#000" stroke-width="1"/><circle cx="6" cy="5" r="1" fill="#000"/></svg>
<div class="a" style="left:1706px;top:587px;width:13px;height:13px;background:#333333"></div>
<svg class="a" style="left:1710px;top:593px" width="9" height="7"><path d="M0 7L9 0v7z" fill="#fff"/><path d="M9 0v7H0z" fill="#fff" stroke="#000" stroke-width="1"/><circle cx="6" cy="5" r="1" fill="#000"/></svg>
<div class="a" style="left:1720px;top:587px;width:13px;height:13px;background:#b5b5b5"></div>
<svg class="a" style="left:1724px;top:593px" width="9" height="7"><path d="M0 7L9 0v7z" fill="#fff"/><path d="M9 0v7H0z" fill="#fff" stroke="#000" stroke-width="1"/><circle cx="6" cy="5" r="1" fill="#000"/></svg>
<div class="a" style="left:1734px;top:587px;width:13px;height:13px;background:#000000"></div>
<div class="a" style="left:1748px;top:587px;width:13px;height:13px;background:#3e3e3e"></div>
<div class="a" style="left:1762px;top:587px;width:13px;height:13px;background:#5e5e5e"></div>
<div class="a" style="left:1776px;top:587px;width:13px;height:13px;background:#6e6e6e"></div>
<div class="a" style="left:1790px;top:587px;width:13px;height:13px;background:#868686"></div>
<div class="a" style="left:1804px;top:587px;width:13px;height:13px;background:#9d9d9d"></div>
<div class="a" style="left:1818px;top:587px;width:13px;height:13px;background:#b2b2b2"></div>
<div class="a" style="left:1832px;top:587px;width:13px;height:13px;background:#c7c7c7"></div>
<div class="a" style="left:1846px;top:587px;width:13px;height:13px;background:#dadada"></div>
<div class="a" style="left:1860px;top:587px;width:13px;height:13px;background:#ececec"></div>
<div class="a" style="left:1874px;top:587px;width:13px;height:13px;background:#fafafa"></div>
<div class="a" style="left:1664px;top:601px;width:13px;height:13px;background:#e30613"></div>
<div class="a" style="left:1678px;top:601px;width:13px;height:13px;background:#e8681c"></div>
<div class="a" style="left:1692px;top:601px;width:13px;height:13px;background:#ffd600"></div>
<div class="a" style="left:1706px;top:601px;width:13px;height:13px;background:#2ea640"></div>
<div class="a" style="left:1720px;top:601px;width:13px;height:13px;background:#1a4fa0"></div>
<div class="a" style="left:1734px;top:601px;width:13px;height:13px;background:#7c3a96"></div>
<svg class="a" style="left:1664px;top:638px" width="240" height="16" fill="none" stroke="#cfcfcf" stroke-width="1.4"><path d="M2 3v10M5 3v10M8 3l4 10"/><path d="M13 12h4l-2 2z" fill="#ccc" stroke="none"/><circle cx="36" cy="8" r="3"/><circle cx="40" cy="3" r="1.5"/><circle cx="40" cy="13" r="1.5"/><g fill="#ccc" stroke="none"><rect x="110" y="2" width="3" height="3"/><rect x="114" y="2" width="3" height="3"/><rect x="118" y="2" width="3" height="3"/><rect x="110" y="6" width="3" height="3"/><rect x="118" y="6" width="3" height="3"/><rect x="110" y="10" width="3" height="3"/><rect x="114" y="10" width="3" height="3"/></g><path d="M122 12h4l-2 2z" fill="#ccc" stroke="none"/><rect x="137.5" y="2.5" width="12" height="11" stroke="#666"/><path d="M163 4h5l1 2h8v8h-14z" fill="#ccc" stroke="none"/><path d="M189 4h9v10h-6l-3-3z" fill="#666" stroke="none"/><path d="M215 4h10M217 6v8h7V6" stroke="#666"/></svg>
<svg class="a" style="left:1905px;top:644px" width="10" height="10" fill="#7a7a7a"><rect x="7" y="1" width="1.5" height="1.5"/><rect x="4" y="4" width="1.5" height="1.5"/><rect x="7" y="4" width="1.5" height="1.5"/><rect x="1" y="7" width="1.5" height="1.5"/><rect x="4" y="7" width="1.5" height="1.5"/><rect x="7" y="7" width="1.5" height="1.5"/></svg>
<div class="a" style="left:1657px;top:660px;width:261px;height:184px;background:#4b4b4b"></div>
<div class="a" style="left:1657px;top:660px;width:261px;height:18px;background:#393939"></div>
<div class="a" style="left:1658px;top:661px;width:46px;height:17px;background:#4b4b4b"></div>
<svg class="a" style="left:1663px;top:664px" width="7" height="11"><path d="M1 4.5l2.5-3 2.5 3M1 6.5l2.5 3 2.5-3" fill="none" stroke="#cfcfcf" stroke-width="1.2"/></svg>
<div class="t" style="left:1671px;top:664px;font-size:10.5px;font-weight:bold;color:#ececec">Farbe</div>
<svg class="a" style="left:1899px;top:664px" width="17" height="11"><path d="M0 3h5l-2.5 3z" fill="#cfcfcf"/><path d="M6 1.5h10M6 4.5h10M6 7.5h10M6 10h10" stroke="#cfcfcf"/></svg>
<svg class="a" style="left:1663px;top:682px" width="32" height="14" fill="none" stroke="#ddd"><rect x="1.5" y="1.5" width="7" height="7" fill="#aaa"/><rect x="4.5" y="4.5" width="7" height="7" fill="#333"/><path d="M21 3h5c2 0 3 1 3 3v3M20 3l2-2M20 3l2 2M27 8l2 2 2-2" stroke-width="1.2"/></svg>
<div class="a" style="left:1674px;top:710px;width:18px;height:18px;background:#8a8a8a;border:1px solid #ddd"></div>
<div class="a" style="left:1678px;top:714px;width:10px;height:10px;background:#4b4b4b;border:1.5px solid #eee"></div>
<div class="a" style="left:1664px;top:700px;width:19px;height:19px;background:#fff;border:1px solid #555;overflow:hidden"><div class="a" style="left:-4px;top:8px;width:26px;height:2px;background:#d01020;transform:rotate(-45deg)"></div></div>
<div class="t" style="left:1708px;top:689px;font-size:11px;color:#d8d8d8">C</div>
<div class="a" style="left:1728px;top:691px;width:103px;height:5px;background:#3e3e3e;border:1px solid #5a5a5a;border-radius:2px"></div>
<div class="a" style="left:1838px;top:685px;width:32px;height:18px;background:#a8a8a8;border:1px solid #333"></div>
<div class="t" style="left:1873px;top:689px;font-size:11px;color:#dcdcdc">%</div>
<div class="t" style="left:1708px;top:714px;font-size:11px;color:#d8d8d8">M</div>
<div class="a" style="left:1728px;top:716px;width:103px;height:5px;background:#3e3e3e;border:1px solid #5a5a5a;border-radius:2px"></div>
<div class="a" style="left:1838px;top:710px;width:32px;height:18px;background:#a8a8a8;border:1px solid #333"></div>
<div class="t" style="left:1873px;top:714px;font-size:11px;color:#dcdcdc">%</div>
<div class="t" style="left:1708px;top:739px;font-size:11px;color:#d8d8d8">Y</div>
<div class="a" style="left:1728px;top:741px;width:103px;height:5px;background:#3e3e3e;border:1px solid #5a5a5a;border-radius:2px"></div>
<div class="a" style="left:1838px;top:735px;width:32px;height:18px;background:#a8a8a8;border:1px solid #333"></div>
<div class="t" style="left:1873px;top:739px;font-size:11px;color:#dcdcdc">%</div>
<div class="t" style="left:1708px;top:764px;font-size:11px;color:#d8d8d8">K</div>
<div class="a" style="left:1728px;top:766px;width:103px;height:5px;background:#3e3e3e;border:1px solid #5a5a5a;border-radius:2px"></div>
<div class="a" style="left:1838px;top:760px;width:32px;height:18px;background:#a8a8a8;border:1px solid #333"></div>
<div class="t" style="left:1873px;top:764px;font-size:11px;color:#dcdcdc">%</div>
<svg class="a" style="left:1669px;top:768px" width="12" height="12" fill="none" stroke="#ddd" stroke-width="1.4"><path d="M2 11V5h8M7 2l3 3-3 3"/></svg>
<div class="a" style="left:1687px;top:767px;width:14px;height:14px;background:#8a8a8a;border:1px solid #eee"></div>
<div class="a" style="left:1664px;top:790px;width:13px;height:13px;background:#fff;overflow:hidden"><div class="a" style="left:-3px;top:5px;width:18px;height:2px;background:#d01020;transform:rotate(-45deg)"></div></div>
<div class="a" style="left:1677px;top:790px;width:13px;height:13px;background:#000"></div>
<div class="a" style="left:1690px;top:790px;width:13px;height:13px;background:#fff"></div>
<div class="a" style="left:1664px;top:814px;width:237px;height:22px;background:linear-gradient(90deg,#e00000,#ffd800 16%,#30b000 33%,#00b0d0 50%,#2030a0 66%,#a000a0 83%,#e00030);"></div>
<div class="a" style="left:1664px;top:814px;width:237px;height:22px;background:linear-gradient(180deg,rgba(255,255,255,.85),rgba(255,255,255,0) 45%,rgba(0,0,0,0) 55%,rgba(0,0,0,.85))"></div>
<svg class="a" style="left:1908px;top:832px" width="10" height="10" fill="#7a7a7a"><rect x="7" y="1" width="1.5" height="1.5"/><rect x="4" y="4" width="1.5" height="1.5"/><rect x="7" y="4" width="1.5" height="1.5"/><rect x="1" y="7" width="1.5" height="1.5"/><rect x="4" y="7" width="1.5" height="1.5"/><rect x="7" y="7" width="1.5" height="1.5"/></svg>
<div class="a" style="left:1657px;top:847px;width:261px;height:170px;background:#4b4b4b"></div>
<div class="a" style="left:1657px;top:847px;width:261px;height:18px;background:#393939"></div>
<div class="a" style="left:1658px;top:848px;width:57px;height:17px;background:#4b4b4b"></div>
<div class="t" style="left:1665px;top:851px;font-size:10.5px;font-weight:bold;color:#ececec">Aussehen</div>
<svg class="a" style="left:1899px;top:851px" width="17" height="11"><path d="M0 3h5l-2.5 3z" fill="#cfcfcf"/><path d="M6 1.5h10M6 4.5h10M6 7.5h10M6 10h10" stroke="#cfcfcf"/></svg>
<div class="a" style="left:1663px;top:869px;width:251px;height:130px;background:#4b4b4b;border:1px solid #333"></div>
<div class="a" style="left:1664px;top:870px;width:249px;height:25px;background:#535353;border-bottom:1px solid #3a3a3a"></div>
<div class="a" style="left:1664px;top:894px;width:249px;height:25px;background:#535353;border-bottom:1px solid #3a3a3a"></div>
<div class="a" style="left:1664px;top:919px;width:249px;height:25px;background:#535353;border-bottom:1px solid #3a3a3a"></div>
<div class="a" style="left:1664px;top:944px;width:249px;height:25px;background:#535353;border-bottom:1px solid #3a3a3a"></div>
<div class="a" style="left:1688px;top:895px;width:1px;height:74px;background:#3a3a3a"></div>
<div class="a" style="left:1667px;top:873px;width:19px;height:19px;background:#fff;border:1px solid #222"></div>
<div class="a" style="left:1669px;top:875px;width:15px;height:15px;border:1px solid #aaa"></div>
<div class="t" style="left:1711px;top:876px;font-size:11px;font-weight:bold;color:#ececec">Pfad</div>
<svg class="a" style="left:1667px;top:897px" width="40" height="70"><g fill="#bbb"><path d="M2 10c3-4.5 11-4.5 14 0c-3 4.5-11 4.5-14 0z"/><path d="M2 35c3-4.5 11-4.5 14 0c-3 4.5-11 4.5-14 0z"/></g><g fill="#555"><circle cx="9" cy="10" r="2"/><circle cx="9" cy="35" r="2"/></g><path d="M2 60c3-4 11-4 14 0c-3 4-11 4-14 0z" fill="#5e5e5e"/><path d="M26 5v10l6-5zM26 30v10l6-5z" fill="#ddd"/></svg>
<div class="t lab" style="left:1711px;top:901px">Kontur:</div>
<div class="t" style="left:1711px;top:926px;font-size:11px;color:#e0e0e0">Fläche:</div>
<div class="t lab" style="left:1711px;top:951px">Deckkraft:</div>
<div class="a" style="left:1789px;top:898px;width:17px;height:17px;background:#fff;border:1px solid #111"></div>
<div class="a" style="left:1791px;top:900px;width:13px;height:13px;background:#8a8a8a;border:1px solid #111"></div>
<div class="a" style="left:1789px;top:923px;width:17px;height:17px;background:#fff;border:1px solid #111;overflow:hidden"><div class="a" style="left:1px;top:6px;width:14px;height:2px;background:#d01020;transform:rotate(-55deg)"></div></div>
<div class="t" style="left:1820px;top:901px;font-size:10.5px;color:#e0e0e0">Tropfen nach unten</div>
<div class="t" style="left:1788px;top:951px;font-size:11px;color:#e0e0e0">Standard</div>
<svg class="a" style="left:1666px;top:1000px" width="240" height="17" fill="none" stroke="#cfcfcf" stroke-width="1.4"><rect x="4.5" y="3.5" width="10" height="10"/><rect x="30.5" y="3.5" width="10" height="10" stroke="#aaa"/><rect x="33" y="6" width="5" height="5" fill="#aaa" stroke="none"/><text x="53" y="14" font-family="Liberation Serif" font-style="italic" font-size="13" fill="#ccc" stroke="none">fx</text><path d="M66 12h5l-2.5 3z" fill="#ccc" stroke="none"/><circle cx="167" cy="8.5" r="5"/><path d="M163.5 5l7 7"/><path d="M187 4h9v10h-6l-3-3z" fill="#666" stroke="none"/><path d="M212 4h10M214 6v8h7V6" stroke="#666"/></svg>
<div class="a" style="left:1657px;top:1020px;width:261px;height:19px;background:#393939"></div>
<div class="a" style="left:1658px;top:1021px;width:56px;height:18px;background:#4b4b4b"></div>
<svg class="a" style="left:1663px;top:1024px" width="7" height="11"><path d="M1 4.5l2.5-3 2.5 3M1 6.5l2.5 3 2.5-3" fill="none" stroke="#cfcfcf" stroke-width="1.2"/></svg>
<div class="t" style="left:1671px;top:1025px;font-size:11px;font-weight:bold;color:#ececec">Zeichen</div>
<div class="t" style="left:1721px;top:1025px;font-size:11px;font-weight:bold;color:#9a9a9a">Absatz</div>
<div class="a" style="left:1760px;top:1022px;width:1px;height:17px;background:#2a2a2a"></div>
<div class="t" style="left:1767px;top:1025px;font-size:11px;font-weight:bold;color:#9a9a9a">OpenType</div>
<div class="a" style="left:1823px;top:1022px;width:1px;height:17px;background:#2a2a2a"></div>
<svg class="a" style="left:1899px;top:1025px" width="17" height="11"><path d="M0 3h5l-2.5 3z" fill="#cfcfcf"/><path d="M6 1.5h10M6 4.5h10M6 7.5h10M6 10h10" stroke="#cfcfcf"/></svg><!-- TRANSFORM / PATHFINDER FLOATING PANEL -->
<div class="a" style="left:134px;top:752px;width:232px;height:242px;background:#4b4b4b;border:1px solid #262626;box-shadow:1px 1px 2px rgba(0,0,0,.3)"></div>
<div class="a" style="left:135px;top:753px;width:230px;height:13px;background:#2e2e2e"></div>
<svg class="a" style="left:336px;top:755px" width="26" height="9"><path d="M4 1v7L0.5 4.5zM8 1v7L4.5 4.5z" fill="#cfcfcf"/><path d="M17 1.5l6 6M23 1.5l-6 6" stroke="#e0e0e0" stroke-width="1.4"/></svg>
<div class="a" style="left:135px;top:766px;width:230px;height:17px;background:#393939"></div>
<div class="a" style="left:135px;top:767px;width:91px;height:16px;background:#4b4b4b"></div>
<svg class="a" style="left:139px;top:769px" width="7" height="11"><path d="M1 4.5l2.5-3 2.5 3M1 6.5l2.5 3 2.5-3" fill="none" stroke="#cfcfcf" stroke-width="1.2"/></svg>
<div class="t" style="left:148px;top:770px;font-size:10.5px;font-weight:bold;color:#ececec">Transformieren</div>
<div class="a" style="left:290px;top:767px;width:1px;height:16px;background:#2a2a2a"></div>
<div class="t" style="left:233px;top:770px;font-size:10.5px;font-weight:bold;color:#9a9a9a">Ausrichten</div>
<svg class="a" style="left:347px;top:769px" width="15" height="10"><path d="M0 3h5l-2.5 3z" fill="#cfcfcf"/><path d="M6 1h9M6 4h9M6 7h9M6 9.5h9" stroke="#cfcfcf"/></svg>
<svg class="a" style="left:139px;top:802px" width="21" height="21" fill="none" stroke="#d8d8d8" stroke-width="1"><rect x="0.5" y="0.5" width="4" height="4"/><rect x="8.5" y="0.5" width="4" height="4"/><rect x="16.5" y="0.5" width="4" height="4"/><rect x="0.5" y="8.5" width="4" height="4"/><rect x="8.5" y="8.5" width="4" height="4"/><rect x="16.5" y="8.5" width="4" height="4" fill="#d8d8d8"/><rect x="0.5" y="16.5" width="4" height="4"/><rect x="8.5" y="16.5" width="4" height="4"/><rect x="16.5" y="16.5" width="4" height="4"/><path d="M4.5 2.5h4M12.5 2.5h4M4.5 10.5h4M12.5 10.5h4M4.5 18.5h4M12.5 18.5h4M2.5 4.5v4M2.5 12.5v4M18.5 4.5v4M18.5 12.5v4"/></svg>
<div class="t" style="left:172px;top:795px;font-size:11px;color:#dcdcdc">x:</div>
<div class="t" style="left:251px;top:795px;font-size:11px;color:#dcdcdc">B:</div>
<div class="t" style="left:172px;top:821px;font-size:11px;color:#dcdcdc">y:</div>
<div class="t" style="left:251px;top:821px;font-size:11px;color:#dcdcdc">H:</div>
<div class="a inp" style="left:187px;top:791px;width:57px;height:18px"></div>
<div class="t it" style="left:191px;top:795px">27,5 mm</div>
<div class="a inp" style="left:266px;top:791px;width:57px;height:18px"></div>
<div class="t it" style="left:270px;top:795px">0 mm</div>
<div class="a inp" style="left:187px;top:817px;width:57px;height:18px"></div>
<div class="t it" style="left:191px;top:821px">8,224 mm</div>
<div class="a inp" style="left:266px;top:817px;width:57px;height:18px"></div>
<div class="t it" style="left:270px;top:821px">7,099 mm</div>
<div class="a" style="left:329px;top:800px;width:23px;height:24px;background:#3a3a3a;border:1px solid #333;border-radius:2px"></div>
<svg class="a" style="left:335px;top:804px" width="11" height="16" fill="none" stroke="#d8d8d8" stroke-width="1.6"><rect x="2" y="1" width="7" height="8" rx="3.5"/><rect x="2" y="7" width="7" height="8" rx="3.5"/></svg>
<svg class="a" style="left:167px;top:845px" width="15" height="12" fill="none" stroke="#d0d0d0" stroke-width="1.1"><path d="M1 11h13L9 2zM6 7l2 4"/></svg>
<div class="t" style="left:181px;top:847px;font-size:11px;color:#dcdcdc">:</div>
<div class="a inp" style="left:187px;top:843px;width:40px;height:18px"></div>
<div class="t it" style="left:190px;top:847px">0°</div>
<div class="ddb" style="left:226px;top:843px;height:18px;background:#5a5a5a"></div>
<svg class="a" style="left:248px;top:845px" width="15" height="12" fill="none" stroke="#d0d0d0" stroke-width="1.1"><path d="M1 11h9l4-10H5z"/></svg>
<div class="t" style="left:262px;top:847px;font-size:11px;color:#dcdcdc">:</div>
<div class="a inp" style="left:268px;top:843px;width:40px;height:18px"></div>
<div class="t it" style="left:271px;top:847px">0°</div>
<div class="ddb" style="left:307px;top:843px;height:18px;background:#5a5a5a"></div>
<div class="a" style="left:135px;top:866px;width:230px;height:4px;background:#2e2e2e"></div>
<div class="a" style="left:135px;top:870px;width:230px;height:17px;background:#393939"></div>
<div class="a" style="left:135px;top:871px;width:64px;height:16px;background:#4b4b4b"></div>
<div class="t" style="left:142px;top:874px;font-size:10.5px;font-weight:bold;color:#ececec">Pathfinder</div>
<svg class="a" style="left:347px;top:873px" width="15" height="10"><path d="M0 3h5l-2.5 3z" fill="#cfcfcf"/><path d="M6 1h9M6 4h9M6 7h9M6 9.5h9" stroke="#cfcfcf"/></svg>
<div class="t" style="left:140px;top:895px;font-size:10.5px;color:#dcdcdc">Formmodi:</div>
<div class="t" style="left:140px;top:945px;font-size:10.5px;color:#dcdcdc">Pathfinder:</div>
<svg class="a" style="left:140px;top:914px" width="120" height="20" fill="none" stroke="#c8c8c8" stroke-width="1">
 <rect x="5.5" y="4.5" width="9" height="9" fill="#999"/><rect x="8.5" y="7.5" width="9" height="9" fill="#999"/>
 <rect x="37.5" y="4.5" width="9" height="9" fill="#aaa"/><rect x="40.5" y="7.5" width="9" height="9" fill="#4b4b4b" stroke="#888"/>
 <rect x="69.5" y="4.5" width="9" height="9"/><rect x="72.5" y="7.5" width="9" height="9"/><rect x="72.5" y="7.5" width="6" height="6" fill="#aaa"/>
 <rect x="102.5" y="4.5" width="9" height="9" fill="#aaa"/><rect x="105.5" y="7.5" width="9" height="9" fill="#aaa"/><rect x="105.5" y="7.5" width="6" height="6" fill="#4b4b4b"/>
</svg>
<div class="a" style="left:271px;top:915px;width:87px;height:19px;background:#4b4b4b;border:1px solid #5a5a5a"></div>
<div class="t" style="left:288px;top:919px;font-size:10.5px;color:#7a7a7a">Umwandeln</div>
<svg class="a" style="left:140px;top:964px" width="220" height="20" fill="none" stroke="#c8c8c8" stroke-width="1">
 <rect x="9.5" y="3.5" width="8" height="8"/><rect x="13.5" y="7.5" width="8" height="8"/>
 <rect x="46.5" y="3.5" width="8" height="8" fill="#aaa"/><rect x="50.5" y="7.5" width="8" height="8" fill="#aaa"/>
 <rect x="83.5" y="3.5" width="9" height="9" fill="#aaa"/><rect x="88.5" y="8.5" width="8" height="8" fill="#999"/>
 <rect x="122.5" y="6.5" width="7" height="7" fill="#aaa" stroke="none"/>
 <rect x="158.5" y="3.5" width="8" height="8"/><rect x="162.5" y="7.5" width="8" height="8"/>
 <rect x="196.5" y="3.5" width="9" height="9" stroke="#888"/><rect x="200.5" y="7.5" width="8" height="8" fill="#888"/>
</svg>

<!-- TOOLTIP -->
<div class="a" style="left:21px;top:128px;width:131px;height:19px;background:linear-gradient(#ffffff,#e4e5e9);border:1px solid #767676;border-radius:2px;box-shadow:1px 1px 2px rgba(0,0,0,.35)"></div>
<div class="t" style="left:26px;top:131px;font-size:12px;color:#555">Auswahl-Werkzeug (V)</div>

</body></html>
